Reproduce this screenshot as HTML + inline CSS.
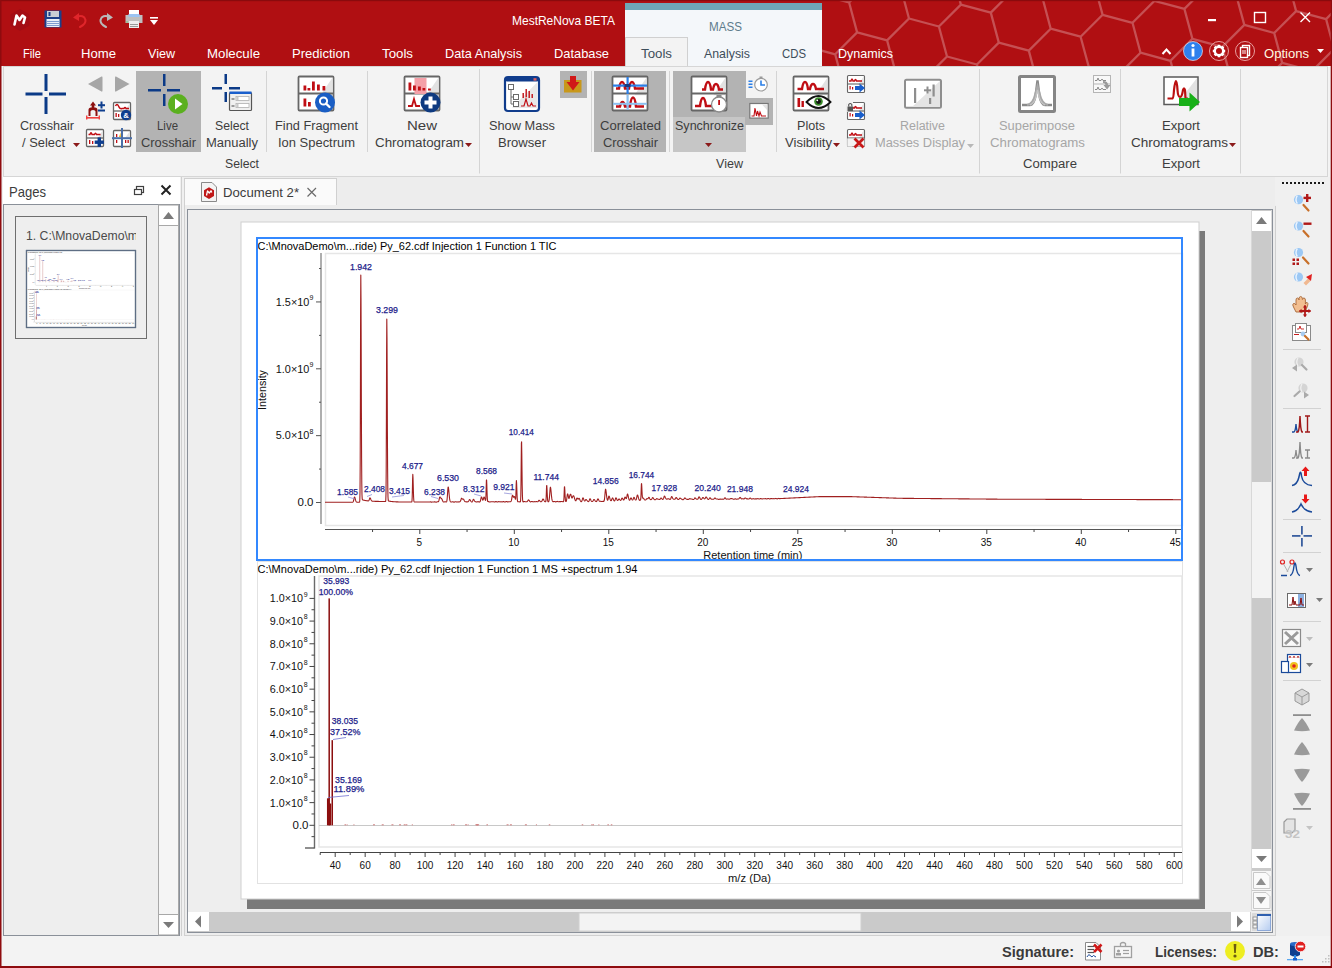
<!DOCTYPE html><html><head><meta charset="utf-8"><style>html,body{margin:0;padding:0;width:1332px;height:968px;overflow:hidden;background:#F3F3F3}</style></head><body><svg width="1332" height="968" viewBox="0 0 1332 968" style="position:absolute;left:0;top:0">
<rect x="0" y="0" width="1332" height="968" fill="#F3F3F3" />
<rect x="0" y="0" width="1332" height="66" fill="#B00F12" />
<clipPath id="hexclip"><rect x="822" y="1" width="510" height="65"/></clipPath>
<path d="M701.5 74.1L731.5 82.1M701.5 74.1L679.6 96.0M701.5 74.1L693.5 44.1M739.5 112.1L769.5 120.1M739.5 112.1L717.6 134.0M739.5 112.1L731.5 82.1M715.4 22.2L745.4 30.2M715.4 22.2L693.5 44.1M715.4 22.2L707.4 -7.7M753.4 60.2L783.4 68.2M753.4 60.2L731.5 82.1M753.4 60.2L745.4 30.2M791.4 98.2L821.3 106.2M791.4 98.2L769.5 120.1M791.4 98.2L783.4 68.2M729.3 -29.6L759.3 -21.6M729.3 -29.6L707.4 -7.7M729.3 -29.6L721.3 -59.6M767.3 8.3L797.2 16.4M767.3 8.3L745.4 30.2M767.3 8.3L759.3 -21.6M805.3 46.3L835.2 54.3M805.3 46.3L783.4 68.2M805.3 46.3L797.2 16.4M843.2 84.3L873.2 92.3M843.2 84.3L821.3 106.2M843.2 84.3L835.2 54.3M881.2 122.2L911.1 130.3M881.2 122.2L859.3 144.1M881.2 122.2L873.2 92.3M781.2 -43.5L811.1 -35.5M781.2 -43.5L759.3 -21.6M781.2 -43.5L773.2 -73.5M819.2 -5.6L849.1 2.5M819.2 -5.6L797.2 16.4M819.2 -5.6L811.1 -35.5M857.1 32.4L887.1 40.4M857.1 32.4L835.2 54.3M857.1 32.4L849.1 2.5M895.1 70.4L925.0 78.4M895.1 70.4L873.2 92.3M895.1 70.4L887.1 40.4M933.1 108.3L963.0 116.4M933.1 108.3L911.1 130.3M933.1 108.3L925.0 78.4M833.1 -57.4L863.0 -49.4M833.1 -57.4L811.1 -35.5M833.1 -57.4L825.0 -87.4M871.0 -19.5L901.0 -11.4M871.0 -19.5L849.1 2.5M871.0 -19.5L863.0 -49.4M909.0 18.5L938.9 26.5M909.0 18.5L887.1 40.4M909.0 18.5L901.0 -11.4M947.0 56.5L976.9 64.5M947.0 56.5L925.0 78.4M947.0 56.5L938.9 26.5M984.9 94.4L1014.9 102.5M984.9 94.4L963.0 116.4M984.9 94.4L976.9 64.5M922.9 -33.4L952.8 -25.3M922.9 -33.4L901.0 -11.4M922.9 -33.4L914.9 -63.3M960.9 4.6L990.8 12.6M960.9 4.6L938.9 26.5M960.9 4.6L952.8 -25.3M998.8 42.6L1028.8 50.6M998.8 42.6L976.9 64.5M998.8 42.6L990.8 12.6M1036.8 80.5L1066.7 88.6M1036.8 80.5L1014.9 102.5M1036.8 80.5L1028.8 50.6M1074.8 118.5L1104.7 126.5M1074.8 118.5L1052.8 140.4M1074.8 118.5L1066.7 88.6M974.8 -47.3L1004.7 -39.2M974.8 -47.3L952.8 -25.3M974.8 -47.3L966.7 -77.2M1012.7 -9.3L1042.7 -1.3M1012.7 -9.3L990.8 12.6M1012.7 -9.3L1004.7 -39.2M1050.7 28.7L1080.6 36.7M1050.7 28.7L1028.8 50.6M1050.7 28.7L1042.7 -1.3M1088.7 66.6L1118.6 74.7M1088.7 66.6L1066.7 88.6M1088.7 66.6L1080.6 36.7M1126.6 104.6L1156.6 112.6M1126.6 104.6L1104.7 126.5M1126.6 104.6L1118.6 74.7M1064.6 -23.2L1094.5 -15.2M1064.6 -23.2L1042.7 -1.3M1064.6 -23.2L1056.6 -53.1M1102.6 14.8L1132.5 22.8M1102.6 14.8L1080.6 36.7M1102.6 14.8L1094.5 -15.2M1140.5 52.7L1170.5 60.8M1140.5 52.7L1118.6 74.7M1140.5 52.7L1132.5 22.8M1178.5 90.7L1208.4 98.7M1178.5 90.7L1156.6 112.6M1178.5 90.7L1170.5 60.8M1216.5 128.7L1246.4 136.7M1216.5 128.7L1194.5 150.6M1216.5 128.7L1208.4 98.7M1116.5 -37.1L1146.4 -29.1M1116.5 -37.1L1094.5 -15.2M1116.5 -37.1L1108.4 -67.0M1154.4 0.9L1184.4 8.9M1154.4 0.9L1132.5 22.8M1154.4 0.9L1146.4 -29.1M1192.4 38.8L1222.3 46.9M1192.4 38.8L1170.5 60.8M1192.4 38.8L1184.4 8.9M1230.4 76.8L1260.3 84.8M1230.4 76.8L1208.4 98.7M1230.4 76.8L1222.3 46.9M1268.3 114.8L1298.3 122.8M1268.3 114.8L1246.4 136.7M1268.3 114.8L1260.3 84.8M1168.3 -51.0L1198.3 -43.0M1168.3 -51.0L1146.4 -29.1M1168.3 -51.0L1160.3 -80.9M1206.3 -13.0L1236.2 -5.0M1206.3 -13.0L1184.4 8.9M1206.3 -13.0L1198.3 -43.0M1244.3 24.9L1274.2 33.0M1244.3 24.9L1222.3 46.9M1244.3 24.9L1236.2 -5.0M1282.2 62.9L1312.2 70.9M1282.2 62.9L1260.3 84.8M1282.2 62.9L1274.2 33.0M1320.2 100.9L1350.1 108.9M1320.2 100.9L1298.3 122.8M1320.2 100.9L1312.2 70.9M1258.2 -26.9L1288.1 -18.9M1258.2 -26.9L1236.2 -5.0M1258.2 -26.9L1250.1 -56.9M1296.1 11.1L1326.1 19.1M1296.1 11.1L1274.2 33.0M1296.1 11.1L1288.1 -18.9M1334.1 49.0L1364.0 57.0M1334.1 49.0L1312.2 70.9M1334.1 49.0L1326.1 19.1M1372.1 87.0L1402.0 95.0M1372.1 87.0L1350.1 108.9M1372.1 87.0L1364.0 57.0M1410.0 125.0L1440.0 133.0M1410.0 125.0L1388.1 146.9M1410.0 125.0L1402.0 95.0M1310.0 -40.8L1340.0 -32.8M1310.0 -40.8L1288.1 -18.9M1310.0 -40.8L1302.0 -70.8M1348.0 -2.8L1377.9 5.2M1348.0 -2.8L1326.1 19.1M1348.0 -2.8L1340.0 -32.8M1385.9 35.1L1415.9 43.1M1385.9 35.1L1364.0 57.0M1385.9 35.1L1377.9 5.2M1423.9 73.1L1453.9 81.1M1423.9 73.1L1402.0 95.0M1423.9 73.1L1415.9 43.1M1361.9 -54.7L1391.8 -46.7M1361.9 -54.7L1340.0 -32.8M1361.9 -54.7L1353.9 -84.7M1399.8 -16.7L1429.8 -8.7M1399.8 -16.7L1377.9 5.2M1399.8 -16.7L1391.8 -46.7M1437.8 21.2L1467.8 29.2M1437.8 21.2L1415.9 43.1M1437.8 21.2L1429.8 -8.7" fill="none" stroke="#C55053" stroke-width="2.3" clip-path="url(#hexclip)" stroke-linecap="round"/>
<rect x="0" y="0" width="1332" height="1.2" fill="#8A0A0D" />
<g>
<path d="M20 9 L29.5 14.5 L29.5 25.5 L20 31 L10.5 25.5 L10.5 14.5 Z" fill="#A40D14" />
<path d="M14.5 24.5 L16.5 15.5 L19.5 20 L22.5 15.5 L25 17.5 L23.5 23" fill="none" stroke="#FFFFFF" stroke-width="2.6" stroke-linejoin="round" stroke-linecap="round"/>
</g>
<rect x="44.5" y="10.5" width="17" height="17" fill="#1D3F8A" />
<rect x="47" y="11" width="12" height="6" fill="#C9CDD5" />
<rect x="48.5" y="12" width="2" height="4" fill="#1D3F8A" />
<rect x="46.5" y="19" width="13" height="8" fill="#E8EEF8" />
<line x1="47" y1="21.5" x2="59" y2="21.5" stroke="#7E9BD0" stroke-width="1" />
<line x1="47" y1="23.5" x2="59" y2="23.5" stroke="#7E9BD0" stroke-width="1" />
<line x1="47" y1="25.5" x2="59" y2="25.5" stroke="#7E9BD0" stroke-width="1" />
<path d="M76 17 Q84 14 85.5 20 Q86 24 80 27" fill="none" stroke="#E0262B" stroke-width="2" stroke-linecap="round"/>
<path d="M73 17.5 L79 13 L79 21 Z" fill="#E0262B" />
<path d="M110 17 Q102 14 100.5 20 Q100 24 106 27" fill="none" stroke="#B9B9B9" stroke-width="2" stroke-linecap="round"/>
<path d="M113 17.5 L107 13 L107 21 Z" fill="#B9B9B9" />
<rect x="129" y="10" width="10" height="5" fill="#FFFFFF" />
<rect x="125.5" y="15" width="17" height="8" fill="#BFBFBF" />
<rect x="128.5" y="14" width="11" height="3" fill="#9CC4F2" />
<rect x="129" y="21" width="10" height="7" fill="#EEEEEE" />
<line x1="130" y1="24.5" x2="138" y2="24.5" stroke="#9A9A9A" stroke-width="1" />
<line x1="130" y1="26.5" x2="138" y2="26.5" stroke="#9A9A9A" stroke-width="1" />
<rect x="126.5" y="21.5" width="1" height="1" fill="#33CC33" />
<rect x="150" y="17" width="8" height="1.6" fill="#FFFFFF" />
<path d="M150 20 L158 20 L154 25 Z" fill="#FFFFFF" />
<text x="512" y="25" font-size="13" fill="#FFFFFF" text-anchor="start" font-weight="normal" font-family='"Liberation Sans", sans-serif' textLength="103" lengthAdjust="spacingAndGlyphs" >MestReNova BETA</text>
<rect x="1208" y="19" width="8" height="2.2" fill="#FFFFFF" />
<rect x="1254.5" y="12.5" width="11" height="10" fill="none" stroke="#FFFFFF" stroke-width="1.4" />
<path d="M1300.5 12.5 L1310 22 M1310 12.5 L1300.5 22" fill="none" stroke="#FFFFFF" stroke-width="1.4" />
<text x="23" y="58" font-size="13" fill="#FFFFFF" text-anchor="start" font-weight="normal" font-family='"Liberation Sans", sans-serif' textLength="18" lengthAdjust="spacingAndGlyphs" >File</text>
<text x="81" y="58" font-size="13" fill="#FFFFFF" text-anchor="start" font-weight="normal" font-family='"Liberation Sans", sans-serif' textLength="35" lengthAdjust="spacingAndGlyphs" >Home</text>
<text x="148" y="58" font-size="13" fill="#FFFFFF" text-anchor="start" font-weight="normal" font-family='"Liberation Sans", sans-serif' textLength="27" lengthAdjust="spacingAndGlyphs" >View</text>
<text x="207" y="58" font-size="13" fill="#FFFFFF" text-anchor="start" font-weight="normal" font-family='"Liberation Sans", sans-serif' textLength="53" lengthAdjust="spacingAndGlyphs" >Molecule</text>
<text x="292" y="58" font-size="13" fill="#FFFFFF" text-anchor="start" font-weight="normal" font-family='"Liberation Sans", sans-serif' textLength="58" lengthAdjust="spacingAndGlyphs" >Prediction</text>
<text x="382" y="58" font-size="13" fill="#FFFFFF" text-anchor="start" font-weight="normal" font-family='"Liberation Sans", sans-serif' textLength="31" lengthAdjust="spacingAndGlyphs" >Tools</text>
<text x="445" y="58" font-size="13" fill="#FFFFFF" text-anchor="start" font-weight="normal" font-family='"Liberation Sans", sans-serif' textLength="77" lengthAdjust="spacingAndGlyphs" >Data Analysis</text>
<text x="554" y="58" font-size="13" fill="#FFFFFF" text-anchor="start" font-weight="normal" font-family='"Liberation Sans", sans-serif' textLength="55" lengthAdjust="spacingAndGlyphs" >Database</text>
<rect x="625" y="3" width="197" height="63" fill="#F4F7FA" />
<rect x="625" y="3" width="197" height="7" fill="#6FA6B6" />
<text x="709" y="31" font-size="12.5" fill="#5E7C8C" text-anchor="start" font-weight="normal" font-family='"Liberation Sans", sans-serif' textLength="33" lengthAdjust="spacingAndGlyphs" >MASS</text>
<rect x="625.5" y="37.5" width="62" height="29" fill="#F3F3F3" stroke="#D0D0D0" stroke-width="1" />
<rect x="626" y="60" width="61" height="7" fill="#F3F3F3" />
<text x="641" y="58" font-size="13" fill="#3E4E5A" text-anchor="start" font-weight="normal" font-family='"Liberation Sans", sans-serif' textLength="31" lengthAdjust="spacingAndGlyphs" >Tools</text>
<text x="704" y="58" font-size="13" fill="#3E4E5A" text-anchor="start" font-weight="normal" font-family='"Liberation Sans", sans-serif' textLength="46" lengthAdjust="spacingAndGlyphs" >Analysis</text>
<text x="782" y="58" font-size="13" fill="#3E4E5A" text-anchor="start" font-weight="normal" font-family='"Liberation Sans", sans-serif' textLength="24" lengthAdjust="spacingAndGlyphs" >CDS</text>
<text x="838" y="58" font-size="13" fill="#FFFFFF" text-anchor="start" font-weight="normal" font-family='"Liberation Sans", sans-serif' textLength="55" lengthAdjust="spacingAndGlyphs" >Dynamics</text>
<path d="M1162.5 54 L1166.5 49.5 L1170.5 54" fill="none" stroke="#FFFFFF" stroke-width="2" />
<circle cx="1193" cy="51" r="9.5" fill="#2F80ED" stroke="#FFFFFF" stroke-opacity="0.6" stroke-width="1"/>
<rect x="1191.6" y="48.5" width="2.8" height="8" fill="#FFFFFF" />
<circle cx="1193" cy="45.5" r="1.6" fill="#FFFFFF"/>
<circle cx="1219" cy="51" r="9.5" fill="none" stroke="#E8A0A0" stroke-width="1"/>
<path d="M1222.50 51.00L1225.20 51.00M1221.47 53.47L1223.38 55.38M1219.00 54.50L1219.00 57.20M1216.53 53.47L1214.62 55.38M1215.50 51.00L1212.80 51.00M1216.53 48.53L1214.62 46.62M1219.00 47.50L1219.00 44.80M1221.47 48.53L1223.38 46.62" fill="none" stroke="#FFFFFF" stroke-width="2.6" />
<circle cx="1219" cy="51" r="4.2" fill="none" stroke="#FFFFFF" stroke-width="2.4"/>
<circle cx="1245" cy="51" r="9.5" fill="none" stroke="#E8A0A0" stroke-width="1"/>
<rect x="1242.5" y="45.5" width="7" height="10" fill="none" stroke="#FFFFFF" stroke-width="1.4" />
<rect x="1240.5" y="47.5" width="7" height="10" fill="#B00F12" stroke="#FFFFFF" stroke-width="1.4" />
<line x1="1242" y1="51" x2="1246" y2="51" stroke="#FFFFFF" stroke-width="1" />
<line x1="1242" y1="53" x2="1246" y2="53" stroke="#FFFFFF" stroke-width="1" />
<text x="1264" y="58" font-size="13" fill="#FFF8E0" text-anchor="start" font-weight="normal" font-family='"Liberation Sans", sans-serif' textLength="45" lengthAdjust="spacingAndGlyphs" >Options</text>
<path d="M1317 49 L1324 49 L1320.5 53 Z" fill="#FFFFFF" />
<rect x="0" y="66" width="1332" height="111" fill="#F3F3F3" />
<rect x="3.5" y="66.5" width="1324" height="110" fill="none" stroke="#D6D6D6" stroke-width="1" />
<rect x="136" y="71" width="65" height="81" fill="#B3B3B3" />
<rect x="594" y="71" width="72" height="81" fill="#B3B3B3" />
<rect x="673" y="71" width="73" height="81" fill="#B3B3B3" />
<rect x="673" y="117" width="73" height="35" fill="#C6C6C6" />
<rect x="745" y="98" width="28" height="27" fill="#B3B3B3" />
<rect x="560" y="71" width="27" height="27" fill="#B3B3B3" />
<line x1="266.5" y1="71" x2="266.5" y2="152" stroke="#D4D4D4" stroke-width="1" />
<line x1="367.5" y1="71" x2="367.5" y2="152" stroke="#D4D4D4" stroke-width="1" />
<line x1="591.5" y1="71" x2="591.5" y2="152" stroke="#D4D4D4" stroke-width="1" />
<line x1="669.5" y1="71" x2="669.5" y2="152" stroke="#D4D4D4" stroke-width="1" />
<line x1="776.5" y1="71" x2="776.5" y2="152" stroke="#D4D4D4" stroke-width="1" />
<line x1="479.5" y1="69" x2="479.5" y2="173.5" stroke="#D4D4D4" stroke-width="1" />
<line x1="979.5" y1="69" x2="979.5" y2="173.5" stroke="#D4D4D4" stroke-width="1" />
<line x1="1120.5" y1="69" x2="1120.5" y2="173.5" stroke="#D4D4D4" stroke-width="1" />
<line x1="1240.5" y1="69" x2="1240.5" y2="173.5" stroke="#D4D4D4" stroke-width="1" />
<text x="20" y="130" font-size="12.5" fill="#3D3D3D" text-anchor="start" font-weight="normal" font-family='"Liberation Sans", sans-serif' textLength="54" lengthAdjust="spacingAndGlyphs" >Crosshair</text>
<text x="22" y="147" font-size="12.5" fill="#3D3D3D" text-anchor="start" font-weight="normal" font-family='"Liberation Sans", sans-serif' textLength="43" lengthAdjust="spacingAndGlyphs" >/ Select</text>
<path d="M73 143 L80 143 L76.5 147 Z" fill="#8B1A1A" />
<text x="157" y="130" font-size="12.5" fill="#3D3D3D" text-anchor="start" font-weight="normal" font-family='"Liberation Sans", sans-serif' textLength="21" lengthAdjust="spacingAndGlyphs" >Live</text>
<text x="141" y="147" font-size="12.5" fill="#3D3D3D" text-anchor="start" font-weight="normal" font-family='"Liberation Sans", sans-serif' textLength="55" lengthAdjust="spacingAndGlyphs" >Crosshair</text>
<text x="215" y="130" font-size="12.5" fill="#3D3D3D" text-anchor="start" font-weight="normal" font-family='"Liberation Sans", sans-serif' textLength="34" lengthAdjust="spacingAndGlyphs" >Select</text>
<text x="206" y="147" font-size="12.5" fill="#3D3D3D" text-anchor="start" font-weight="normal" font-family='"Liberation Sans", sans-serif' textLength="52" lengthAdjust="spacingAndGlyphs" >Manually</text>
<text x="275" y="130" font-size="12.5" fill="#3D3D3D" text-anchor="start" font-weight="normal" font-family='"Liberation Sans", sans-serif' textLength="83" lengthAdjust="spacingAndGlyphs" >Find Fragment</text>
<text x="278" y="147" font-size="12.5" fill="#3D3D3D" text-anchor="start" font-weight="normal" font-family='"Liberation Sans", sans-serif' textLength="77" lengthAdjust="spacingAndGlyphs" >Ion Spectrum</text>
<text x="407" y="130" font-size="12.5" fill="#3D3D3D" text-anchor="start" font-weight="normal" font-family='"Liberation Sans", sans-serif' textLength="30" lengthAdjust="spacingAndGlyphs" >New</text>
<text x="375" y="147" font-size="12.5" fill="#3D3D3D" text-anchor="start" font-weight="normal" font-family='"Liberation Sans", sans-serif' textLength="89" lengthAdjust="spacingAndGlyphs" >Chromatogram</text>
<path d="M465 143 L472 143 L468.5 147 Z" fill="#8B1A1A" />
<text x="489" y="130" font-size="12.5" fill="#3D3D3D" text-anchor="start" font-weight="normal" font-family='"Liberation Sans", sans-serif' textLength="66" lengthAdjust="spacingAndGlyphs" >Show Mass</text>
<text x="498" y="147" font-size="12.5" fill="#3D3D3D" text-anchor="start" font-weight="normal" font-family='"Liberation Sans", sans-serif' textLength="48" lengthAdjust="spacingAndGlyphs" >Browser</text>
<text x="600" y="130" font-size="12.5" fill="#3D3D3D" text-anchor="start" font-weight="normal" font-family='"Liberation Sans", sans-serif' textLength="61" lengthAdjust="spacingAndGlyphs" >Correlated</text>
<text x="603" y="147" font-size="12.5" fill="#3D3D3D" text-anchor="start" font-weight="normal" font-family='"Liberation Sans", sans-serif' textLength="55" lengthAdjust="spacingAndGlyphs" >Crosshair</text>
<text x="675" y="130" font-size="12.5" fill="#3D3D3D" text-anchor="start" font-weight="normal" font-family='"Liberation Sans", sans-serif' textLength="69" lengthAdjust="spacingAndGlyphs" >Synchronize</text>
<path d="M705 143 L712 143 L708.5 147 Z" fill="#8B1A1A" />
<text x="797" y="130" font-size="12.5" fill="#3D3D3D" text-anchor="start" font-weight="normal" font-family='"Liberation Sans", sans-serif' textLength="28" lengthAdjust="spacingAndGlyphs" >Plots</text>
<text x="785" y="147" font-size="12.5" fill="#3D3D3D" text-anchor="start" font-weight="normal" font-family='"Liberation Sans", sans-serif' textLength="47" lengthAdjust="spacingAndGlyphs" >Visibility</text>
<path d="M833 143 L840 143 L836.5 147 Z" fill="#8B1A1A" />
<text x="900" y="130" font-size="12.5" fill="#A6A6A6" text-anchor="start" font-weight="normal" font-family='"Liberation Sans", sans-serif' textLength="45" lengthAdjust="spacingAndGlyphs" >Relative</text>
<text x="875" y="147" font-size="12.5" fill="#A6A6A6" text-anchor="start" font-weight="normal" font-family='"Liberation Sans", sans-serif' textLength="90" lengthAdjust="spacingAndGlyphs" >Masses Display</text>
<path d="M967 144 L974 144 L970.5 148 Z" fill="#B8B8B8" />
<text x="999" y="130" font-size="12.5" fill="#A6A6A6" text-anchor="start" font-weight="normal" font-family='"Liberation Sans", sans-serif' textLength="76" lengthAdjust="spacingAndGlyphs" >Superimpose</text>
<text x="990" y="147" font-size="12.5" fill="#A6A6A6" text-anchor="start" font-weight="normal" font-family='"Liberation Sans", sans-serif' textLength="95" lengthAdjust="spacingAndGlyphs" >Chromatograms</text>
<text x="1162" y="130" font-size="12.5" fill="#3D3D3D" text-anchor="start" font-weight="normal" font-family='"Liberation Sans", sans-serif' textLength="38" lengthAdjust="spacingAndGlyphs" >Export</text>
<text x="1131" y="147" font-size="12.5" fill="#3D3D3D" text-anchor="start" font-weight="normal" font-family='"Liberation Sans", sans-serif' textLength="97" lengthAdjust="spacingAndGlyphs" >Chromatograms</text>
<path d="M1229 143 L1236 143 L1232.5 147 Z" fill="#8B1A1A" />
<text x="225" y="168" font-size="12.5" fill="#3D3D3D" text-anchor="start" font-weight="normal" font-family='"Liberation Sans", sans-serif' textLength="34" lengthAdjust="spacingAndGlyphs" >Select</text>
<text x="716" y="168" font-size="12.5" fill="#3D3D3D" text-anchor="start" font-weight="normal" font-family='"Liberation Sans", sans-serif' textLength="27" lengthAdjust="spacingAndGlyphs" >View</text>
<text x="1023" y="168" font-size="12.5" fill="#3D3D3D" text-anchor="start" font-weight="normal" font-family='"Liberation Sans", sans-serif' textLength="54" lengthAdjust="spacingAndGlyphs" >Compare</text>
<text x="1162" y="168" font-size="12.5" fill="#3D3D3D" text-anchor="start" font-weight="normal" font-family='"Liberation Sans", sans-serif' textLength="38" lengthAdjust="spacingAndGlyphs" >Export</text>
<rect x="0" y="177" width="1332" height="759" fill="#F0F0F0" />
<rect x="3" y="177" width="177" height="27" fill="#FFFFFF" />
<text x="9" y="197" font-size="15" fill="#3C3C3C" text-anchor="start" font-weight="normal" font-family='"Liberation Sans", sans-serif' textLength="37" lengthAdjust="spacingAndGlyphs" >Pages</text>
<rect x="136.5" y="186.5" width="7" height="6" fill="none" stroke="#404040" stroke-width="1.2" />
<rect x="134.5" y="189.5" width="7" height="5" fill="#FFFFFF" stroke="#404040" stroke-width="1.2" />
<path d="M161.5 185.5 L170.5 194.5 M170.5 185.5 L161.5 194.5" fill="none" stroke="#222" stroke-width="2" />
<rect x="3.5" y="204.5" width="176" height="731" fill="#EEEEEE" stroke="#8A9099" stroke-width="1" />
<rect x="158.5" y="205" width="20" height="730" fill="#F5F5F5" stroke="#A8A8A8" stroke-width="1" />
<rect x="159" y="206" width="19" height="19" fill="#FFFFFF" />
<line x1="159" y1="225.5" x2="178" y2="225.5" stroke="#A8A8A8" stroke-width="1" />
<path d="M163 219 L174 219 L168.5 212 Z" fill="#7A7A7A" />
<rect x="159" y="915" width="19" height="19" fill="#FFFFFF" />
<line x1="159" y1="914.5" x2="178" y2="914.5" stroke="#A8A8A8" stroke-width="1" />
<path d="M163 922 L174 922 L168.5 928 Z" fill="#7A7A7A" />
<rect x="15.5" y="216.5" width="131" height="122" fill="#EEEEEE" stroke="#6E6E6E" stroke-width="1" />
<text x="26" y="240" font-size="12.5" fill="#4A4A4A" text-anchor="start" font-weight="normal" font-family='"Liberation Sans", sans-serif' textLength="112" lengthAdjust="spacingAndGlyphs" >1. C:\MnovaDemo\m</text>
<rect x="136" y="225" width="10" height="25" fill="#EEEEEE" />
<rect x="26.5" y="250.5" width="109" height="77" fill="#FFFFFF" stroke="#5E6E84" stroke-width="1.2" />
<line x1="181.5" y1="177" x2="181.5" y2="936" stroke="#D0D0D0" stroke-width="1" />
<rect x="184" y="177" width="1091" height="29" fill="#EDEDED" />
<rect x="184.5" y="178.5" width="152" height="27" fill="#FAFAFA" stroke="#D0D0D0" stroke-width="1" />
<text x="223" y="197" font-size="13" fill="#3C3C3C" text-anchor="start" font-weight="normal" font-family='"Liberation Sans", sans-serif' textLength="76" lengthAdjust="spacingAndGlyphs" >Document 2*</text>
<path d="M307.5 188 L316 196.5 M316 188 L307.5 196.5" fill="none" stroke="#6A6A6A" stroke-width="1.2" />
<path d="M201.5 182.5 L212 182.5 L216.5 187 L216.5 201.5 L201.5 201.5 Z" fill="#F4F4F4" stroke="#8A8A8A" stroke-width="1" />
<path d="M209 187.3 L214 190.2 L214 196 L209 198.9 L204 196 L204 190.2 Z" fill="#C01818" />
<path d="M206.5 195.5 L207.5 190.8 L209.3 193 L211 190.8 L211.8 192.5" fill="none" stroke="#FFF" stroke-width="1.3" stroke-linejoin="round"/>
<rect x="184.5" y="205.5" width="1091" height="730" fill="#EDEDED" stroke="#D0D0D0" stroke-width="1" />
<rect x="185" y="205" width="1091" height="1.2" fill="#EDEDED" />
<rect x="187.5" y="209.5" width="1085" height="723" fill="#EEEEEE" stroke="#8A9099" stroke-width="1" />
<rect x="247" y="231" width="958" height="678" fill="#7A7A7A" />
<rect x="241" y="222" width="958" height="677" fill="#FFFFFF" stroke="#CFCFCF" stroke-width="1" />
<rect x="1251.5" y="210" width="20" height="701" fill="#CACACA" />
<line x1="1251.5" y1="210" x2="1251.5" y2="911" stroke="#D8D8D8" stroke-width="1" />
<rect x="1252" y="211" width="19" height="20" fill="#FFFFFF" />
<path d="M1256 224 L1267 224 L1261.5 217 Z" fill="#7A7A7A" />
<rect x="1252" y="482" width="19" height="116" fill="#F3F3F3" />
<rect x="1252" y="849" width="19" height="19" fill="#FFFFFF" />
<path d="M1256 856 L1267 856 L1261.5 862 Z" fill="#7A7A7A" />
<rect x="1252" y="871" width="19" height="19" fill="#F6F6F6" />
<path d="M1253.5 872.5 L1266 872.5 L1270 876.5 L1270 888.5 L1253.5 888.5 Z" fill="#FAFAFA" stroke="#C8C8C8" stroke-width="1" />
<path d="M1256 885 L1266 885 L1261 878 Z" fill="#8E8E8E" />
<rect x="1252" y="891" width="19" height="19" fill="#F6F6F6" />
<path d="M1253.5 892.5 L1266 892.5 L1270 896.5 L1270 908.5 L1253.5 908.5 Z" fill="#FAFAFA" stroke="#C8C8C8" stroke-width="1" />
<path d="M1256 897 L1266 897 L1261 904 Z" fill="#8E8E8E" />
<rect x="188" y="912" width="1063" height="20" fill="#CACACA" />
<rect x="188" y="912" width="21" height="19" fill="#FFFFFF" />
<path d="M195 921.5 L201 915.5 L201 927.5 Z" fill="#7A7A7A" />
<rect x="579" y="913" width="282" height="18" fill="#F3F3F3" stroke="#D0D0D0" stroke-width="1" />
<rect x="1231" y="912" width="19" height="19" fill="#FFFFFF" />
<path d="M1243 921.5 L1237 915.5 L1237 927.5 Z" fill="#7A7A7A" />
<rect x="1252" y="913" width="19" height="18" fill="#DADADA" />
<defs><linearGradient id="cg" x1="0" y1="0" x2="1" y2="1"><stop offset="0" stop-color="#FFFFFF"/><stop offset="1" stop-color="#B5CCF0"/></linearGradient></defs>
<rect x="1257.5" y="914.5" width="13" height="16" fill="url(#cg)" stroke="#8CA8D8" stroke-width="1" />
<rect x="1257" y="914" width="14" height="2" fill="#3060B0" />
<rect x="1253" y="917" width="4" height="3" fill="#F5F5F5" stroke="#8A8A8A" stroke-width="0.8" />
<rect x="1253" y="921" width="4" height="3" fill="#F5F5F5" stroke="#8A8A8A" stroke-width="0.8" />
<rect x="1253" y="925" width="4" height="3" fill="#F5F5F5" stroke="#8A8A8A" stroke-width="0.8" />
<rect x="1276" y="177" width="54" height="759" fill="#F0F0F0" />
<line x1="1275.5" y1="206" x2="1275.5" y2="936" stroke="#D0D0D0" stroke-width="1" />
<rect x="1282" y="182" width="2" height="2" fill="#1A1A1A" />
<rect x="1286" y="182" width="2" height="2" fill="#1A1A1A" />
<rect x="1290" y="182" width="2" height="2" fill="#1A1A1A" />
<rect x="1294" y="182" width="2" height="2" fill="#1A1A1A" />
<rect x="1298" y="182" width="2" height="2" fill="#1A1A1A" />
<rect x="1302" y="182" width="2" height="2" fill="#1A1A1A" />
<rect x="1306" y="182" width="2" height="2" fill="#1A1A1A" />
<rect x="1310" y="182" width="2" height="2" fill="#1A1A1A" />
<rect x="1314" y="182" width="2" height="2" fill="#1A1A1A" />
<rect x="1318" y="182" width="2" height="2" fill="#1A1A1A" />
<rect x="1322" y="182" width="2" height="2" fill="#1A1A1A" />
<rect x="0" y="936" width="1332" height="30" fill="#F3F3F3" />
<text x="1002" y="957" font-size="14" fill="#3A3A3A" text-anchor="start" font-weight="bold" font-family='"Liberation Sans", sans-serif' textLength="72" lengthAdjust="spacingAndGlyphs" >Signature:</text>
<text x="1155" y="957" font-size="14" fill="#3A3A3A" text-anchor="start" font-weight="bold" font-family='"Liberation Sans", sans-serif' textLength="62" lengthAdjust="spacingAndGlyphs" >Licenses:</text>
<text x="1253" y="957" font-size="14" fill="#3A3A3A" text-anchor="start" font-weight="bold" font-family='"Liberation Sans", sans-serif' textLength="26" lengthAdjust="spacingAndGlyphs" >DB:</text>
<circle cx="1235" cy="951" r="10" fill="#EEEE22"/>
<path d="M1233.6 944 L1236.4 944 L1235.8 953 L1234.2 953 Z" fill="#6A5A10" />
<circle cx="1235" cy="956" r="1.6" fill="#6A5A10"/>
<rect x="0" y="0" width="1.5" height="968" fill="#8E0B0E" />
<rect x="1330.7" y="0" width="1.3" height="968" fill="#8E0B0E" />
<rect x="0" y="966" width="1332" height="2" fill="#8E0B0E" />
<g id="pg">
<rect x="257" y="238" width="925" height="322" fill="#FFFFFF" />
<text x="257.5" y="250" font-size="11" fill="#000" text-anchor="start" font-weight="normal" font-family='"Liberation Sans", sans-serif' textLength="299" lengthAdjust="spacingAndGlyphs" >C:\MnovaDemo\m...ride) Py_62.cdf Injection 1 Function 1 TIC</text>
<rect x="325.5" y="253.5" width="857" height="272" fill="#FFFFFF" stroke="#E6E6E6" stroke-width="1.5" />
<line x1="321" y1="253" x2="321" y2="524" stroke="#9A9A9A" stroke-width="1.6" />
<line x1="316" y1="301.95000000000005" x2="321" y2="301.95000000000005" stroke="#555" stroke-width="1" />
<text x="309.3" y="305.75000000000006" font-size="10" fill="#111" text-anchor="end" font-weight="normal" font-family='"Liberation Sans", sans-serif' textLength="33.5" lengthAdjust="spacingAndGlyphs" >1.5×10</text>
<text x="309.5" y="299.95000000000005" font-size="7" fill="#111" text-anchor="start" font-weight="normal" font-family='"Liberation Sans", sans-serif' >9</text>
<line x1="316" y1="368.8" x2="321" y2="368.8" stroke="#555" stroke-width="1" />
<text x="309.3" y="372.6" font-size="10" fill="#111" text-anchor="end" font-weight="normal" font-family='"Liberation Sans", sans-serif' textLength="33.5" lengthAdjust="spacingAndGlyphs" >1.0×10</text>
<text x="309.5" y="366.8" font-size="7" fill="#111" text-anchor="start" font-weight="normal" font-family='"Liberation Sans", sans-serif' >9</text>
<line x1="316" y1="435.65" x2="321" y2="435.65" stroke="#555" stroke-width="1" />
<text x="309.3" y="439.45" font-size="10" fill="#111" text-anchor="end" font-weight="normal" font-family='"Liberation Sans", sans-serif' textLength="33.5" lengthAdjust="spacingAndGlyphs" >5.0×10</text>
<text x="309.5" y="433.65" font-size="7" fill="#111" text-anchor="start" font-weight="normal" font-family='"Liberation Sans", sans-serif' >8</text>
<text x="313.5" y="506.3" font-size="10" fill="#111" text-anchor="end" font-weight="normal" font-family='"Liberation Sans", sans-serif' textLength="16" lengthAdjust="spacingAndGlyphs" >0.0</text>
<line x1="316" y1="502.5" x2="321" y2="502.5" stroke="#555" stroke-width="1" />
<line x1="319" y1="268.52500000000003" x2="321" y2="268.52500000000003" stroke="#555" stroke-width="1" />
<line x1="319" y1="335.375" x2="321" y2="335.375" stroke="#555" stroke-width="1" />
<line x1="319" y1="402.225" x2="321" y2="402.225" stroke="#555" stroke-width="1" />
<line x1="319" y1="469.075" x2="321" y2="469.075" stroke="#555" stroke-width="1" />
<text x="266" y="410" font-size="10" fill="#111" font-family='Liberation Sans' transform="rotate(-90 266 410)" textLength="40" lengthAdjust="spacingAndGlyphs">Intensity</text>
<line x1="325" y1="529.5" x2="1182" y2="529.5" stroke="#555" stroke-width="1" />
<line x1="419.8" y1="529.5" x2="419.8" y2="534" stroke="#444" stroke-width="1" />
<text x="419.3" y="545.7" font-size="10" fill="#111" text-anchor="middle" font-weight="normal" font-family='"Liberation Sans", sans-serif' >5</text>
<line x1="514.3" y1="529.5" x2="514.3" y2="534" stroke="#444" stroke-width="1" />
<text x="513.8" y="545.7" font-size="10" fill="#111" text-anchor="middle" font-weight="normal" font-family='"Liberation Sans", sans-serif' >10</text>
<line x1="608.8" y1="529.5" x2="608.8" y2="534" stroke="#444" stroke-width="1" />
<text x="608.3" y="545.7" font-size="10" fill="#111" text-anchor="middle" font-weight="normal" font-family='"Liberation Sans", sans-serif' >15</text>
<line x1="703.3" y1="529.5" x2="703.3" y2="534" stroke="#444" stroke-width="1" />
<text x="702.8" y="545.7" font-size="10" fill="#111" text-anchor="middle" font-weight="normal" font-family='"Liberation Sans", sans-serif' >20</text>
<line x1="797.8" y1="529.5" x2="797.8" y2="534" stroke="#444" stroke-width="1" />
<text x="797.3" y="545.7" font-size="10" fill="#111" text-anchor="middle" font-weight="normal" font-family='"Liberation Sans", sans-serif' >25</text>
<line x1="892.3" y1="529.5" x2="892.3" y2="534" stroke="#444" stroke-width="1" />
<text x="891.8" y="545.7" font-size="10" fill="#111" text-anchor="middle" font-weight="normal" font-family='"Liberation Sans", sans-serif' >30</text>
<line x1="986.8" y1="529.5" x2="986.8" y2="534" stroke="#444" stroke-width="1" />
<text x="986.3" y="545.7" font-size="10" fill="#111" text-anchor="middle" font-weight="normal" font-family='"Liberation Sans", sans-serif' >35</text>
<line x1="1081.3" y1="529.5" x2="1081.3" y2="534" stroke="#444" stroke-width="1" />
<text x="1080.8" y="545.7" font-size="10" fill="#111" text-anchor="middle" font-weight="normal" font-family='"Liberation Sans", sans-serif' >40</text>
<line x1="1175.8" y1="529.5" x2="1175.8" y2="534" stroke="#444" stroke-width="1" />
<text x="1175.3" y="545.7" font-size="10" fill="#111" text-anchor="middle" font-weight="normal" font-family='"Liberation Sans", sans-serif' >45</text>
<line x1="372.55" y1="529.5" x2="372.55" y2="532" stroke="#444" stroke-width="1" />
<line x1="467.05" y1="529.5" x2="467.05" y2="532" stroke="#444" stroke-width="1" />
<line x1="561.55" y1="529.5" x2="561.55" y2="532" stroke="#444" stroke-width="1" />
<line x1="656.05" y1="529.5" x2="656.05" y2="532" stroke="#444" stroke-width="1" />
<line x1="750.55" y1="529.5" x2="750.55" y2="532" stroke="#444" stroke-width="1" />
<line x1="845.05" y1="529.5" x2="845.05" y2="532" stroke="#444" stroke-width="1" />
<line x1="939.55" y1="529.5" x2="939.55" y2="532" stroke="#444" stroke-width="1" />
<line x1="1034.05" y1="529.5" x2="1034.05" y2="532" stroke="#444" stroke-width="1" />
<line x1="1128.55" y1="529.5" x2="1128.55" y2="532" stroke="#444" stroke-width="1" />
<text x="703.3" y="558.6" font-size="10" fill="#111" text-anchor="start" font-weight="normal" font-family='"Liberation Sans", sans-serif' textLength="99" lengthAdjust="spacingAndGlyphs" >Retention time (min)</text>
<polyline points="325.00,502.30 325.20,502.30 325.40,502.30 325.60,502.30 325.80,502.30 326.00,502.30 326.20,502.30 326.40,502.30 326.60,502.30 326.80,502.29 327.00,502.29 327.20,502.29 327.40,502.29 327.60,502.29 327.80,502.29 328.00,502.29 328.20,502.29 328.40,502.29 328.60,502.29 328.80,502.29 329.00,502.29 329.20,502.29 329.40,502.29 329.60,502.29 329.80,502.29 330.00,502.28 330.20,502.28 330.40,502.28 330.60,502.28 330.80,502.28 331.00,502.28 331.20,502.28 331.40,502.28 331.60,502.28 331.80,502.28 332.00,502.28 332.20,502.28 332.40,502.28 332.60,502.28 332.80,502.28 333.00,502.28 333.20,502.28 333.40,502.27 333.60,502.27 333.80,502.27 334.00,502.27 334.20,502.27 334.40,502.27 334.60,502.27 334.80,502.27 335.00,502.27 335.20,502.27 335.40,502.27 335.60,502.27 335.80,502.27 336.00,502.27 336.20,502.27 336.40,502.27 336.60,502.26 336.80,502.26 337.00,502.26 337.20,502.26 337.40,502.26 337.60,502.26 337.80,502.26 338.00,502.26 338.20,502.26 338.40,502.26 338.60,502.26 338.80,502.26 339.00,502.26 339.20,502.26 339.40,502.26 339.60,502.26 339.80,502.26 340.00,502.25 340.20,502.25 340.40,502.25 340.60,502.25 340.80,502.25 341.00,502.25 341.20,502.25 341.40,502.25 341.60,502.25 341.80,502.25 342.00,502.25 342.20,502.25 342.40,502.25 342.60,502.25 342.80,502.25 343.00,502.25 343.20,502.24 343.40,502.24 343.60,502.24 343.80,502.24 344.00,502.24 344.20,502.24 344.40,502.24 344.60,502.24 344.80,502.24 345.00,502.24 345.20,502.24 345.40,502.24 345.60,502.24 345.80,502.24 346.00,502.24 346.20,502.24 346.40,502.24 346.60,502.23 346.80,502.23 347.00,502.23 347.20,502.23 347.40,502.23 347.60,502.23 347.80,502.23 348.00,502.23 348.20,502.23 348.40,502.23 348.60,502.23 348.80,502.23 349.00,502.23 349.20,502.23 349.40,502.23 349.60,502.23 349.80,502.22 350.00,502.22 350.20,502.22 350.40,502.22 350.60,502.22 350.80,502.22 351.00,502.22 351.20,502.22 351.40,502.22 351.60,502.22 351.80,502.22 352.00,502.22 352.20,502.21 352.40,502.21 352.60,502.18 352.80,502.12 353.00,501.99 353.20,501.72 353.40,501.24 353.60,500.52 353.80,499.57 354.00,498.53 354.20,497.61 354.40,497.07 354.60,497.04 354.80,497.34 355.00,497.90 355.20,498.62 355.40,499.40 355.60,500.14 355.80,500.77 356.00,501.27 356.20,501.63 356.40,501.87 356.60,502.02 356.80,502.11 357.00,502.16 357.20,502.18 357.40,502.19 357.60,502.20 357.80,502.20 358.00,502.20 358.20,502.20 358.40,502.20 358.60,502.20 358.80,502.20 359.00,502.20 359.20,502.20 359.40,502.18 359.60,501.99 359.80,500.47 360.00,492.21 360.20,463.02 360.40,398.18 360.60,315.31 360.80,275.00 361.00,298.09 361.20,351.48 361.40,412.93 361.60,458.70 361.80,484.07 362.00,494.93 362.20,498.60 362.40,499.61 362.60,499.86 362.80,499.95 363.00,500.01 363.20,500.06 363.40,500.11 363.60,500.16 363.80,500.20 364.00,500.25 364.20,500.29 364.40,500.33 364.60,500.37 364.80,500.41 365.00,500.45 365.20,500.49 365.40,500.52 365.60,500.56 365.80,500.59 366.00,500.62 366.20,500.65 366.40,500.68 366.60,500.71 366.80,500.74 367.00,500.76 367.20,500.79 367.40,500.82 367.60,500.84 367.80,500.86 368.00,500.87 368.20,500.87 368.40,500.84 368.60,500.74 368.80,500.54 369.00,500.20 369.20,499.71 369.40,499.10 369.60,498.51 369.80,498.06 370.00,497.91 370.20,498.02 370.40,498.30 370.60,498.71 370.80,499.19 371.00,499.67 371.20,500.10 371.40,500.46 371.60,500.73 371.80,500.93 372.00,501.06 372.20,501.14 372.40,501.19 372.60,501.22 372.80,501.24 373.00,501.26 373.20,501.27 373.40,501.28 373.60,501.29 373.80,501.29 374.00,501.30 374.20,501.31 374.40,501.32 374.60,501.32 374.80,501.33 375.00,501.34 375.20,501.34 375.40,501.35 375.60,501.36 375.80,501.36 376.00,501.37 376.20,501.37 376.40,501.38 376.60,501.38 376.80,501.39 377.00,501.39 377.20,501.40 377.40,501.40 377.60,501.40 377.80,501.41 378.00,501.41 378.20,501.42 378.40,501.42 378.60,501.42 378.80,501.43 379.00,501.43 379.20,501.43 379.40,501.44 379.60,501.44 379.80,501.44 380.00,501.44 380.20,501.45 380.40,501.45 380.60,501.45 380.80,501.45 381.00,501.45 381.20,501.46 381.40,501.46 381.60,501.46 381.80,501.46 382.00,501.46 382.20,501.47 382.40,501.47 382.60,501.47 382.80,501.47 383.00,501.47 383.20,501.47 383.40,501.47 383.60,501.48 383.80,501.48 384.00,501.48 384.20,501.48 384.40,501.48 384.60,501.48 384.80,501.48 385.00,501.48 385.20,501.48 385.40,501.47 385.60,501.32 385.80,500.10 386.00,493.44 386.20,470.55 386.40,418.28 386.60,351.49 386.80,319.00 387.00,337.61 387.20,381.40 387.40,430.93 387.60,467.82 387.80,488.27 388.00,497.02 388.20,499.97 388.40,500.79 388.60,500.99 388.80,501.06 389.00,501.10 389.20,501.14 389.40,501.18 389.60,501.22 389.80,501.25 390.00,501.28 390.20,501.32 390.40,501.35 390.60,501.38 390.80,501.40 391.00,501.43 391.20,501.46 391.40,501.48 391.60,501.51 391.80,501.53 392.00,501.55 392.20,501.57 392.40,501.59 392.60,501.61 392.80,501.63 393.00,501.65 393.20,501.66 393.40,501.68 393.60,501.70 393.80,501.71 394.00,501.73 394.20,501.74 394.40,501.75 394.60,501.77 394.80,501.78 395.00,501.79 395.20,501.80 395.40,501.81 395.60,501.82 395.80,501.83 396.00,501.84 396.20,501.85 396.40,501.86 396.60,501.87 396.80,501.88 397.00,501.88 397.20,501.89 397.40,501.90 397.60,501.91 397.80,501.91 398.00,501.92 398.20,501.92 398.40,501.93 398.60,501.94 398.80,501.94 399.00,501.95 399.20,501.95 399.40,501.95 399.60,501.96 399.80,501.96 400.00,501.97 400.20,501.97 400.40,501.97 400.60,501.98 400.80,501.98 401.00,501.98 401.20,501.99 401.40,501.99 401.60,501.99 401.80,502.00 402.00,502.00 402.20,502.00 402.40,502.00 402.60,502.00 402.80,502.01 403.00,502.01 403.20,502.01 403.40,502.01 403.60,502.01 403.80,502.02 404.00,502.02 404.20,502.02 404.40,502.02 404.60,502.02 404.80,502.02 405.00,502.02 405.20,502.02 405.40,502.03 405.60,502.03 405.80,502.03 406.00,502.03 406.20,502.03 406.40,502.03 406.60,502.03 406.80,502.03 407.00,502.03 407.20,502.03 407.40,502.03 407.60,502.03 407.80,502.03 408.00,502.03 408.20,502.03 408.40,502.03 408.60,502.03 408.80,502.03 409.00,502.03 409.20,502.03 409.40,502.03 409.60,502.03 409.80,502.03 410.00,502.03 410.20,502.05 410.40,502.05 410.60,502.05 410.80,502.05 411.00,502.05 411.20,502.05 411.40,502.04 411.60,502.02 411.80,501.83 412.00,500.83 412.20,497.28 412.40,489.39 412.60,479.30 412.80,474.40 413.00,477.21 413.20,484.04 413.40,491.50 413.60,497.06 413.80,500.14 414.00,501.45 414.20,501.89 414.40,502.01 414.60,502.03 414.80,502.04 415.00,502.04 415.20,502.03 415.40,502.03 415.60,502.03 415.80,502.03 416.00,502.03 416.20,502.03 416.40,502.03 416.60,502.03 416.80,502.03 417.00,502.03 417.20,502.03 417.40,502.03 417.60,502.03 417.80,502.03 418.00,502.03 418.20,502.03 418.40,502.03 418.60,502.02 418.80,502.02 419.00,502.02 419.20,502.02 419.40,502.02 419.60,502.02 419.80,502.02 420.00,502.02 420.20,502.02 420.40,502.02 420.60,502.02 420.80,502.02 421.00,502.02 421.20,502.02 421.40,502.02 421.60,502.02 421.80,502.02 422.00,502.01 422.20,502.01 422.40,502.01 422.60,502.01 422.80,502.01 423.00,502.01 423.20,502.01 423.40,502.01 423.60,502.01 423.80,502.01 424.00,502.01 424.20,502.01 424.40,502.01 424.60,502.01 424.80,502.01 425.00,502.01 425.20,502.01 425.40,502.01 425.60,502.00 425.80,502.00 426.00,502.00 426.20,502.00 426.40,502.00 426.60,502.00 426.80,502.00 427.00,502.00 427.20,502.00 427.40,502.00 427.60,502.00 427.80,502.00 428.00,502.00 428.20,502.00 428.40,502.00 428.60,502.00 428.80,502.00 429.00,501.99 429.20,501.99 429.40,501.99 429.60,501.99 429.80,501.99 430.00,501.99 430.20,501.78 430.40,501.82 430.60,501.89 430.80,501.97 431.00,502.04 431.20,502.09 431.40,502.12 431.60,502.11 431.80,502.09 432.00,502.05 432.20,502.01 432.40,501.98 432.60,501.96 432.80,501.97 433.00,501.98 433.20,502.00 433.40,502.01 433.60,502.01 433.80,501.99 434.00,501.95 434.20,501.91 434.40,501.87 434.60,501.84 434.80,501.84 435.00,501.87 435.20,501.93 435.40,502.00 435.60,502.08 435.80,502.15 436.00,502.19 436.20,502.20 436.40,502.16 436.60,502.09 436.80,501.99 437.00,501.88 437.20,501.80 437.40,501.74 437.60,501.72 437.80,501.73 438.00,501.76 438.20,501.76 438.40,501.68 438.60,501.41 438.80,500.91 439.00,500.12 439.20,499.14 439.40,498.12 439.60,497.32 439.80,496.95 440.00,496.97 440.20,497.20 440.40,497.54 440.60,497.87 440.80,498.09 441.00,498.18 441.20,498.23 441.40,498.34 441.60,498.60 441.80,498.94 442.00,499.34 442.20,499.80 442.40,500.27 442.60,500.72 442.80,501.13 443.00,501.47 443.20,501.73 443.40,501.91 443.60,502.02 443.80,502.06 444.00,502.05 444.20,501.99 444.40,501.90 444.60,501.82 444.80,501.75 445.00,501.71 445.20,501.71 445.40,501.76 445.60,501.84 445.80,501.94 446.00,502.03 446.20,502.07 446.40,502.01 446.60,501.76 446.80,501.17 447.00,500.07 447.20,498.29 447.40,495.80 447.60,492.83 447.80,489.90 448.00,487.73 448.20,486.95 448.40,487.44 448.60,488.75 448.80,490.66 449.00,492.86 449.20,495.07 449.40,497.04 449.60,498.64 449.80,499.84 450.00,500.68 450.20,501.23 450.40,501.57 450.60,501.78 450.80,501.91 451.00,501.98 451.20,502.02 451.40,502.01 451.60,501.98 451.80,501.92 452.00,501.86 452.20,501.79 452.40,501.74 452.60,501.72 452.80,501.74 453.00,501.80 453.20,501.88 453.40,501.98 453.60,502.07 453.80,502.14 454.00,502.17 454.20,502.16 454.40,502.10 454.60,502.01 454.80,501.91 455.00,501.81 455.20,501.74 455.40,501.70 455.60,501.70 455.80,501.74 456.00,501.81 456.20,501.88 456.40,501.96 456.60,502.02 456.80,502.05 457.00,502.05 457.20,502.02 457.40,501.98 457.60,501.94 457.80,501.91 458.00,501.89 458.20,501.89 458.40,501.90 458.60,501.92 458.80,501.93 459.00,501.93 459.20,501.92 459.40,501.88 459.60,501.83 459.80,501.76 460.00,501.66 460.20,501.51 460.40,501.26 460.60,500.87 460.80,500.31 461.00,499.63 461.20,498.94 461.40,498.42 461.60,498.21 461.80,498.27 462.00,498.47 462.20,498.74 462.40,498.99 462.60,499.14 462.80,499.16 463.00,499.08 463.20,499.00 463.40,499.04 463.60,499.26 463.80,499.58 464.00,499.97 464.20,500.39 464.40,500.79 464.60,501.13 464.80,501.38 465.00,501.54 465.20,501.64 465.40,501.69 465.60,501.72 465.80,501.75 466.00,501.78 466.20,501.81 466.40,501.85 466.60,501.87 466.80,501.89 467.00,501.88 467.20,501.87 467.40,501.84 467.60,501.81 467.80,501.78 468.00,501.73 468.20,501.64 468.40,501.48 468.60,501.20 468.80,500.82 469.00,500.37 469.20,499.95 469.40,499.66 469.60,499.58 469.80,499.63 470.00,499.80 470.20,500.05 470.40,500.36 470.60,500.69 470.80,501.02 471.00,501.32 471.20,501.59 471.40,501.80 471.60,501.94 471.80,502.01 472.00,501.99 472.20,501.85 472.40,501.57 472.60,501.16 472.80,500.64 473.00,500.09 473.20,499.62 473.40,499.36 473.60,499.36 473.80,499.54 474.00,499.85 474.20,500.23 474.40,500.62 474.60,500.98 474.80,501.27 475.00,501.48 475.20,501.62 475.40,501.71 475.60,501.77 475.80,501.82 476.00,501.86 476.20,501.90 476.40,501.94 476.60,501.95 476.80,501.95 477.00,501.92 477.20,501.86 477.40,501.80 477.60,501.73 477.80,501.68 478.00,501.65 478.20,501.67 478.40,501.71 478.60,501.79 478.80,501.89 479.00,501.98 479.20,502.05 479.40,502.08 479.60,502.06 479.80,501.95 480.00,501.74 480.20,501.39 480.40,500.85 480.60,500.10 480.80,499.18 481.00,498.20 481.20,497.38 481.40,496.94 481.60,496.99 481.80,497.35 482.00,497.92 482.20,498.61 482.40,499.28 482.60,499.82 482.80,500.12 483.00,500.10 483.20,499.73 483.40,499.06 483.60,498.23 483.80,497.47 484.00,497.03 484.20,497.04 484.40,497.33 484.60,497.85 484.80,498.49 485.00,499.17 485.20,499.81 485.40,500.31 485.60,500.39 485.80,499.11 486.00,494.78 486.20,487.08 486.40,480.27 486.60,479.91 486.80,484.23 487.00,490.46 487.20,495.93 487.40,499.38 487.60,500.99 487.80,501.53 488.00,501.62 488.20,501.60 488.40,501.57 488.60,501.59 488.80,501.64 489.00,501.73 489.20,501.82 489.40,501.92 489.60,501.98 489.80,502.02 490.00,502.01 490.20,501.98 490.40,501.92 490.60,501.85 490.80,501.78 491.00,501.74 491.20,501.72 491.40,501.72 491.60,501.74 491.80,501.77 492.00,501.80 492.20,501.81 492.40,501.81 492.60,501.80 492.80,501.78 493.00,501.76 493.20,501.75 493.40,501.76 493.60,501.79 493.80,501.84 494.00,501.89 494.20,501.94 494.40,501.97 494.60,501.97 494.80,501.94 495.00,501.88 495.20,501.79 495.40,501.70 495.60,501.62 495.80,501.57 496.00,501.56 496.20,501.60 496.40,501.67 496.60,501.76 496.80,501.87 497.00,501.96 497.20,502.02 497.40,502.04 497.60,502.02 497.80,501.96 498.00,501.87 498.20,501.78 498.40,501.70 498.60,501.64 498.80,501.62 499.00,501.63 499.20,501.67 499.40,501.72 499.60,501.77 499.80,501.82 500.00,501.85 500.20,501.85 500.40,501.84 500.60,501.82 500.80,501.80 501.00,501.79 501.20,501.79 501.40,501.81 501.60,501.83 501.80,501.86 502.00,501.88 502.20,501.87 502.40,501.85 502.60,501.80 502.80,501.73 503.00,501.67 503.20,501.61 503.40,501.58 503.60,501.59 503.80,501.63 504.00,501.71 504.20,501.80 504.40,501.90 504.60,501.97 504.80,502.02 505.00,502.02 505.20,501.98 505.40,501.90 505.60,501.80 505.80,501.70 506.00,501.61 506.20,501.56 506.40,501.54 506.60,501.57 506.80,501.63 507.00,501.71 507.20,501.79 507.40,501.86 507.60,501.90 507.80,501.91 508.00,501.89 508.20,501.85 508.40,501.81 508.60,501.77 508.80,501.74 509.00,501.73 509.20,501.74 509.40,501.76 509.60,501.77 509.80,501.78 510.00,501.77 510.20,501.75 510.40,501.70 510.60,501.63 510.80,501.52 511.00,501.33 511.20,500.99 511.40,500.42 511.60,499.55 511.80,498.40 512.00,497.12 512.20,495.99 512.40,495.30 512.60,495.22 512.80,495.51 513.00,496.03 513.20,496.61 513.40,497.09 513.60,497.31 513.80,497.24 514.00,496.94 514.20,496.62 514.40,496.53 514.60,496.79 514.80,497.28 515.00,497.92 515.20,498.63 515.40,499.22 515.60,499.11 515.80,496.97 516.00,491.43 516.20,484.13 516.40,480.62 516.60,482.84 516.80,488.04 517.00,493.71 517.20,497.94 517.40,500.29 517.60,501.30 517.80,501.63 518.00,501.71 518.20,501.71 518.40,501.69 518.60,501.68 518.80,501.69 519.00,501.71 519.20,501.75 519.40,501.81 519.60,501.86 519.80,501.89 520.00,501.90 520.20,501.85 520.40,501.65 520.60,500.56 520.80,496.03 521.00,483.44 521.20,461.92 521.40,442.99 521.60,441.71 521.80,453.31 522.00,470.23 522.20,485.25 522.40,494.86 522.60,499.54 522.80,501.30 523.00,501.80 523.20,501.87 523.40,501.81 523.60,501.72 523.80,501.64 524.00,501.57 524.20,501.54 524.40,501.55 524.60,501.58 524.80,501.64 525.00,501.69 525.20,501.74 525.40,501.77 525.60,501.78 525.80,501.77 526.00,501.75 526.20,501.73 526.40,501.71 526.60,501.69 526.80,501.68 527.00,501.64 527.20,501.55 527.40,501.37 527.60,501.10 527.80,500.74 528.00,500.37 528.20,500.06 528.40,499.90 528.60,499.89 528.80,500.00 529.00,500.22 529.20,500.50 529.40,500.82 529.60,501.14 529.80,501.42 530.00,501.65 530.20,501.79 530.40,501.87 530.60,501.87 530.80,501.82 531.00,501.73 531.20,501.63 531.40,501.55 531.60,501.49 531.80,501.47 532.00,501.49 532.20,501.55 532.40,501.62 532.60,501.70 532.80,501.77 533.00,501.82 533.20,501.84 533.40,501.82 533.60,501.79 533.80,501.75 534.00,501.70 534.20,501.67 534.40,501.66 534.60,501.66 534.80,501.68 535.00,501.69 535.20,501.71 535.40,501.70 535.60,501.68 535.80,501.65 536.00,501.61 536.20,501.57 536.40,501.56 536.60,501.56 536.80,501.60 537.00,501.65 537.20,501.72 537.40,501.78 537.60,501.79 537.80,501.74 538.00,501.60 538.20,501.36 538.40,501.04 538.60,500.71 538.80,500.44 539.00,500.30 539.20,500.29 539.40,500.39 539.60,500.58 539.80,500.83 540.00,501.10 540.20,501.35 540.40,501.56 540.60,501.70 540.80,501.77 541.00,501.78 541.20,501.73 541.40,501.63 541.60,501.47 541.80,501.23 542.00,500.90 542.20,500.47 542.40,499.96 542.60,499.47 542.80,499.12 543.00,499.00 543.20,499.09 543.40,499.31 543.60,499.62 543.80,499.99 544.00,500.37 544.20,500.72 544.40,501.04 544.60,501.29 544.80,501.50 545.00,501.65 545.20,501.74 545.40,501.78 545.60,501.74 545.80,501.43 546.00,500.18 546.20,496.76 546.40,490.96 546.60,485.87 546.80,485.49 547.00,488.58 547.20,493.12 547.40,497.18 547.60,499.82 547.80,501.14 548.00,501.67 548.20,501.83 548.40,501.82 548.60,501.67 548.80,501.34 549.00,500.71 549.20,499.62 549.40,497.91 549.60,495.53 549.80,492.71 550.00,489.93 550.20,487.89 550.40,487.17 550.60,487.65 550.80,488.91 551.00,490.73 551.20,492.84 551.40,494.94 551.60,496.84 551.80,498.40 552.00,499.59 552.20,500.43 552.40,500.99 552.60,501.34 552.80,501.54 553.00,501.64 553.20,501.67 553.40,501.65 553.60,501.60 553.80,501.54 554.00,501.48 554.20,501.45 554.40,501.44 554.60,501.47 554.80,501.54 555.00,501.62 555.20,501.72 555.40,501.80 555.60,501.86 555.80,501.88 556.00,501.85 556.20,501.78 556.40,501.68 556.60,501.58 556.80,501.49 557.00,501.42 557.20,501.39 557.40,501.41 557.60,501.46 557.80,501.54 558.00,501.62 558.20,501.69 558.40,501.74 558.60,501.77 558.80,501.76 559.00,501.73 559.20,501.68 559.40,501.64 559.60,501.60 559.80,501.58 560.00,501.58 560.20,501.60 560.40,501.62 560.60,501.63 560.80,501.63 561.00,501.61 561.20,501.58 561.40,501.54 561.60,501.51 561.80,501.49 562.00,501.49 562.20,501.52 562.40,501.58 562.60,501.65 562.80,501.72 563.00,501.79 563.20,501.82 563.40,501.78 563.60,501.49 563.80,500.33 564.00,497.17 564.20,491.83 564.40,487.13 564.60,486.76 564.80,489.57 565.00,493.71 565.20,497.42 565.40,499.83 565.60,501.04 565.80,501.49 566.00,501.54 566.20,501.30 566.40,500.76 566.60,499.84 566.80,498.54 567.00,496.98 567.20,495.45 567.40,494.31 567.60,493.89 567.80,494.12 568.00,494.78 568.20,495.72 568.40,496.76 568.60,497.68 568.80,498.30 569.00,498.47 569.20,498.14 569.40,497.40 569.60,496.44 569.80,495.53 570.00,494.89 570.20,494.50 570.40,494.25 570.60,494.20 570.80,494.44 571.00,495.02 571.20,495.81 571.40,496.61 571.60,497.33 571.80,497.84 572.00,498.05 572.20,497.93 572.40,497.51 572.60,496.93 572.80,496.39 573.00,496.05 573.20,495.89 573.40,495.80 573.60,495.85 573.80,496.08 574.00,496.55 574.20,497.18 574.40,497.85 574.60,498.52 574.80,499.16 575.00,499.73 575.20,500.21 575.40,500.57 575.60,500.77 575.80,500.77 576.00,500.54 576.20,500.07 576.40,499.44 576.60,498.76 576.80,498.23 577.00,498.01 577.20,498.08 577.40,498.32 577.60,498.66 577.80,498.99 578.00,499.19 578.20,499.19 578.40,498.99 578.60,498.68 578.80,498.40 579.00,498.32 579.20,498.42 579.40,498.67 579.60,499.03 579.80,499.48 580.00,499.96 580.20,500.43 580.40,500.85 580.60,501.19 580.80,501.45 581.00,501.62 581.20,501.69 581.40,501.64 581.60,501.47 581.80,501.14 582.00,500.63 582.20,499.97 582.40,499.20 582.60,498.48 582.80,497.97 583.00,497.83 583.20,498.01 583.40,498.39 583.60,498.91 583.80,499.48 584.00,500.03 584.20,500.48 584.40,500.81 584.60,500.98 584.80,500.99 585.00,500.86 585.20,500.58 585.40,500.23 585.60,499.86 585.80,499.60 586.00,499.51 586.20,499.57 586.40,499.74 586.60,499.96 586.80,500.23 587.00,500.49 587.20,500.74 587.40,500.96 587.60,501.15 587.80,501.32 588.00,501.46 588.20,501.56 588.40,501.61 588.60,501.56 588.80,501.40 589.00,501.08 589.20,500.60 589.40,500.01 589.60,499.42 589.80,498.96 590.00,498.77 590.20,498.83 590.40,499.07 590.60,499.45 590.80,499.91 591.00,500.39 591.20,500.81 591.40,501.14 591.60,501.38 591.80,501.50 592.00,501.54 592.20,501.51 592.40,501.44 592.60,501.32 592.80,501.14 593.00,500.90 593.20,500.59 593.40,500.22 593.60,499.86 593.80,499.60 594.00,499.51 594.20,499.57 594.40,499.73 594.60,499.96 594.80,500.24 595.00,500.53 595.20,500.81 595.40,501.06 595.60,501.27 595.80,501.43 596.00,501.54 596.20,501.59 596.40,501.56 596.60,501.44 596.80,501.21 597.00,500.84 597.20,500.35 597.40,499.79 597.60,499.27 597.80,498.91 598.00,498.82 598.20,498.97 598.40,499.29 598.60,499.70 598.80,500.15 599.00,500.57 599.20,500.91 599.40,501.15 599.60,501.28 599.80,501.33 600.00,501.33 600.20,501.31 600.40,501.28 600.60,501.28 600.80,501.31 601.00,501.35 601.20,501.41 601.40,501.46 601.60,501.50 601.80,501.51 602.00,501.51 602.20,501.49 602.40,501.46 602.60,501.43 602.80,501.41 603.00,501.41 603.20,501.41 603.40,501.42 603.60,501.41 603.80,501.33 604.00,501.10 604.20,500.62 604.40,499.73 604.60,498.29 604.80,496.28 605.00,493.88 605.20,491.52 605.40,489.79 605.60,489.18 605.80,489.62 606.00,490.73 606.20,492.31 606.40,494.13 606.60,495.92 606.80,497.50 607.00,498.74 607.20,499.59 607.40,500.09 607.60,500.23 607.80,500.06 608.00,499.57 608.20,498.80 608.40,497.86 608.60,496.93 608.80,496.25 609.00,496.05 609.20,496.26 609.40,496.73 609.60,497.38 609.80,498.11 610.00,498.83 610.20,499.47 610.40,499.99 610.60,500.37 610.80,500.62 611.00,500.74 611.20,500.71 611.40,500.50 611.60,500.11 611.80,499.55 612.00,498.90 612.20,498.32 612.40,497.96 612.60,497.91 612.80,498.08 613.00,498.42 613.20,498.89 613.40,499.42 613.60,499.92 613.80,500.36 614.00,500.69 614.20,500.89 614.40,500.95 614.60,500.85 614.80,500.60 615.00,500.18 615.20,499.61 615.40,498.96 615.60,498.36 615.80,497.94 616.00,497.83 616.20,498.01 616.40,498.36 616.60,498.81 616.80,499.31 617.00,499.77 617.20,500.14 617.40,500.38 617.60,500.48 617.80,500.44 618.00,500.27 618.20,499.97 618.40,499.61 618.60,499.26 618.80,499.02 619.00,498.95 619.20,499.03 619.40,499.21 619.60,499.45 619.80,499.71 620.00,499.95 620.20,500.16 620.40,500.31 620.60,500.36 620.80,500.29 621.00,500.08 621.20,499.71 621.40,499.23 621.60,498.71 621.80,498.30 622.00,498.11 622.20,498.13 622.40,498.28 622.60,498.54 622.80,498.87 623.00,499.22 623.20,499.56 623.40,499.83 623.60,500.00 623.80,499.99 624.00,499.77 624.20,499.31 624.40,498.67 624.60,497.98 624.80,497.41 625.00,497.15 625.20,497.16 625.40,497.36 625.60,497.71 625.80,498.12 626.00,498.47 626.20,498.63 626.40,498.47 626.60,497.91 626.80,496.97 627.00,495.83 627.20,494.77 627.40,494.13 627.60,494.09 627.80,494.46 628.00,495.15 628.20,496.04 628.40,497.03 628.60,497.97 628.80,498.79 629.00,499.44 629.20,499.89 629.40,500.15 629.60,500.22 629.80,500.10 630.00,499.81 630.20,499.37 630.40,498.83 630.60,498.32 630.80,497.97 631.00,497.87 631.20,498.02 631.40,498.32 631.60,498.72 631.80,499.15 632.00,499.54 632.20,499.84 632.40,500.01 632.60,500.02 632.80,499.86 633.00,499.51 633.20,499.01 633.40,498.41 633.60,497.85 633.80,497.46 634.00,497.37 634.20,497.54 634.40,497.86 634.60,498.29 634.80,498.75 635.00,499.18 635.20,499.54 635.40,499.79 635.60,499.94 635.80,499.97 636.00,499.84 636.20,499.52 636.40,498.95 636.60,498.12 636.80,497.10 637.00,496.08 637.20,495.30 637.40,494.99 637.60,495.11 637.80,495.52 638.00,496.15 638.20,496.91 638.40,497.70 638.60,498.44 638.80,499.08 639.00,499.59 639.20,499.96 639.40,500.20 639.60,500.33 639.80,500.36 640.00,500.33 640.20,500.25 640.40,500.11 640.60,499.74 640.80,498.45 641.00,494.99 641.20,489.12 641.40,483.96 641.60,483.61 641.80,486.71 642.00,491.15 642.20,494.94 642.40,497.16 642.60,497.99 642.80,498.11 643.00,498.06 643.20,498.08 643.40,498.19 643.60,498.40 643.80,498.68 644.00,498.99 644.20,499.29 644.40,499.56 644.60,499.76 644.80,499.90 645.00,499.98 645.20,500.01 645.40,499.98 645.60,499.92 645.80,499.80 646.00,499.63 646.20,499.40 646.40,499.14 646.60,498.89 646.80,498.70 647.00,498.64 647.20,498.66 647.40,498.71 647.60,498.75 647.80,498.71 648.00,498.57 648.20,498.29 648.40,497.92 648.60,497.55 648.80,497.31 649.00,497.30 649.20,497.50 649.40,497.82 649.60,498.22 649.80,498.64 650.00,499.02 650.20,499.32 650.40,499.51 650.60,499.62 650.80,499.65 651.00,499.62 651.20,499.55 651.40,499.43 651.60,499.24 651.80,498.96 652.00,498.59 652.20,498.18 652.40,497.82 652.60,497.61 652.80,497.60 653.00,497.72 653.20,497.94 653.40,498.23 653.60,498.55 653.80,498.87 654.00,499.16 654.20,499.39 654.40,499.57 654.60,499.69 654.80,499.76 655.00,499.77 655.20,499.73 655.40,499.66 655.60,499.55 655.80,499.41 656.00,499.25 656.20,499.05 656.40,498.85 656.60,498.69 656.80,498.60 657.00,498.62 657.20,498.72 657.40,498.86 657.60,499.01 657.80,499.13 658.00,499.23 658.20,499.28 658.40,499.30 658.60,499.31 658.80,499.31 659.00,499.33 659.20,499.37 659.40,499.42 659.60,499.44 659.80,499.41 660.00,499.30 660.20,499.09 660.40,498.79 660.60,498.46 660.80,498.19 661.00,498.05 661.20,498.05 661.40,498.15 661.60,498.33 661.80,498.57 662.00,498.82 662.20,499.04 662.40,499.23 662.60,499.34 662.80,499.37 663.00,499.31 663.20,499.13 663.40,498.79 663.60,498.29 663.80,497.66 664.00,496.98 664.20,496.41 664.40,496.11 664.60,496.16 664.80,496.42 665.00,496.83 665.20,497.30 665.40,497.78 665.60,498.20 665.80,498.53 666.00,498.78 666.20,498.94 666.40,499.05 666.60,499.12 666.80,499.16 667.00,499.15 667.20,499.10 667.40,499.00 667.60,498.88 667.80,498.77 668.00,498.71 668.20,498.71 668.40,498.73 668.60,498.79 668.80,498.87 669.00,498.96 669.20,499.07 669.40,499.18 669.60,499.28 669.80,499.36 670.00,499.40 670.20,499.37 670.40,499.24 670.60,498.97 670.80,498.54 671.00,497.97 671.20,497.36 671.40,496.82 671.60,496.53 671.80,496.54 672.00,496.76 672.20,497.13 672.40,497.58 672.60,498.03 672.80,498.44 673.00,498.75 673.20,498.97 673.40,499.09 673.60,499.15 673.80,499.19 674.00,499.21 674.20,499.25 674.40,499.29 674.60,499.32 674.80,499.28 675.00,499.15 675.20,498.90 675.40,498.53 675.60,498.13 675.80,497.78 676.00,497.59 676.20,497.55 676.40,497.63 676.60,497.82 676.80,498.07 677.00,498.37 677.20,498.67 677.40,498.95 677.60,499.17 677.80,499.34 678.00,499.45 678.20,499.50 678.40,499.49 678.60,499.43 678.80,499.30 679.00,499.11 679.20,498.87 679.40,498.59 679.60,498.32 679.80,498.13 680.00,498.07 680.20,498.11 680.40,498.22 680.60,498.37 680.80,498.53 681.00,498.68 681.20,498.82 681.40,498.95 681.60,499.07 681.80,499.19 682.00,499.31 682.20,499.43 682.40,499.54 682.60,499.62 682.80,499.68 683.00,499.68 683.20,499.64 683.40,499.54 683.60,499.39 683.80,499.18 684.00,498.93 684.20,498.63 684.40,498.33 684.60,498.07 684.80,497.92 685.00,497.93 685.20,498.06 685.40,498.25 685.60,498.48 685.80,498.71 686.00,498.91 686.20,499.06 686.40,499.17 686.60,499.23 686.80,499.28 687.00,499.31 687.20,499.34 687.40,499.37 687.60,499.39 687.80,499.41 688.00,499.42 688.20,499.40 688.40,499.36 688.60,499.29 688.80,499.19 689.00,499.07 689.20,498.93 689.40,498.79 689.60,498.66 689.80,498.60 690.00,498.62 690.20,498.70 690.40,498.81 690.60,498.91 690.80,498.99 691.00,499.05 691.20,499.07 691.40,499.07 691.60,499.06 691.80,499.07 692.00,499.10 692.20,499.16 692.40,499.25 692.60,499.35 692.80,499.45 693.00,499.53 693.20,499.57 693.40,499.56 693.60,499.47 693.80,499.32 694.00,499.09 694.20,498.79 694.40,498.46 694.60,498.16 694.80,497.95 695.00,497.89 695.20,497.96 695.40,498.12 695.60,498.32 695.80,498.54 696.00,498.74 696.20,498.91 696.40,499.04 696.60,499.13 696.80,499.20 697.00,499.26 697.20,499.30 697.40,499.32 697.60,499.29 697.80,499.16 698.00,498.91 698.20,498.51 698.40,498.01 698.60,497.48 698.80,497.06 699.00,496.85 699.20,496.86 699.40,497.04 699.60,497.35 699.80,497.74 700.00,498.18 700.20,498.59 700.40,498.94 700.60,499.21 700.80,499.37 701.00,499.45 701.20,499.43 701.40,499.35 701.60,499.20 701.80,498.99 702.00,498.71 702.20,498.38 702.40,498.03 702.60,497.71 702.80,497.50 703.00,497.46 703.20,497.58 703.40,497.77 703.60,498.02 703.80,498.28 704.00,498.52 704.20,498.71 704.40,498.84 704.60,498.89 704.80,498.84 705.00,498.66 705.20,498.35 705.40,497.94 705.60,497.52 705.80,497.18 706.00,497.02 706.20,497.04 706.40,497.18 706.60,497.41 706.80,497.71 707.00,498.04 707.20,498.37 707.40,498.68 707.60,498.95 707.80,499.18 708.00,499.34 708.20,499.43 708.40,499.46 708.60,499.39 708.80,499.25 709.00,499.01 709.20,498.70 709.40,498.36 709.60,498.04 709.80,497.83 710.00,497.78 710.20,497.87 710.40,498.06 710.60,498.30 710.80,498.56 711.00,498.81 711.20,499.00 711.40,499.13 711.60,499.20 711.80,499.22 712.00,499.21 712.20,499.20 712.40,499.19 712.60,499.19 712.80,499.20 713.00,499.22 713.20,499.23 713.40,499.21 713.60,499.16 713.80,499.05 714.00,498.88 714.20,498.65 714.40,498.38 714.60,498.14 714.80,497.99 715.00,497.97 715.20,498.08 715.40,498.25 715.60,498.46 715.80,498.67 716.00,498.85 716.20,498.97 716.40,499.03 716.60,499.04 716.80,499.01 717.00,498.97 717.20,498.95 717.40,498.95 717.60,499.00 717.80,499.07 718.00,499.17 718.20,499.27 718.40,499.36 718.60,499.41 718.80,499.43 719.00,499.40 719.20,499.35 719.40,499.27 719.60,499.19 719.80,499.13 720.00,499.08 720.20,499.07 720.40,499.08 720.60,499.11 720.80,499.15 721.00,499.18 721.20,499.20 721.40,499.20 721.60,499.19 721.80,499.17 722.00,499.16 722.20,499.15 722.40,499.15 722.60,499.18 722.80,499.22 723.00,499.26 723.20,499.28 723.40,499.28 723.60,499.22 723.80,499.10 724.00,498.90 724.20,498.63 724.40,498.32 724.60,498.04 724.80,497.84 725.00,497.78 725.20,497.87 725.40,498.05 725.60,498.29 725.80,498.56 726.00,498.80 726.20,499.00 726.40,499.12 726.60,499.17 726.80,499.16 727.00,499.10 727.20,499.03 727.40,498.97 727.60,498.93 727.80,498.92 728.00,498.95 728.20,499.00 728.40,499.07 728.60,499.13 728.80,499.17 729.00,499.20 729.20,499.19 729.40,499.16 729.60,499.11 729.80,499.04 730.00,498.95 730.20,498.86 730.40,498.75 730.60,498.65 730.80,498.59 731.00,498.57 731.20,498.57 731.40,498.60 731.60,498.62 731.80,498.65 732.00,498.68 732.20,498.72 732.40,498.77 732.60,498.84 732.80,498.92 733.00,499.02 733.20,499.13 733.40,499.22 733.60,499.28 733.80,499.30 734.00,499.28 734.20,499.22 734.40,499.13 734.60,499.02 734.80,498.92 735.00,498.85 735.20,498.81 735.40,498.82 735.60,498.87 735.80,498.94 736.00,499.03 736.20,499.11 736.40,499.17 736.60,499.20 736.80,499.19 737.00,499.16 737.20,499.11 737.40,499.06 737.60,499.01 737.80,498.98 738.00,498.96 738.20,498.96 738.40,498.95 738.60,498.91 738.80,498.81 739.00,498.64 739.20,498.37 739.40,498.05 739.60,497.73 739.80,497.48 740.00,497.40 740.20,497.46 740.40,497.63 740.60,497.88 740.80,498.17 741.00,498.45 741.20,498.69 741.40,498.85 741.60,498.94 741.80,498.95 742.00,498.92 742.20,498.85 742.40,498.78 742.60,498.73 742.80,498.72 743.00,498.75 743.20,498.81 743.40,498.88 743.60,498.95 743.80,498.97 744.00,498.92 744.20,498.79 744.40,498.58 744.60,498.35 744.80,498.13 745.00,498.00 745.20,497.96 745.40,497.99 745.60,498.09 745.80,498.24 746.00,498.40 746.20,498.57 746.40,498.71 746.60,498.81 746.80,498.87 747.00,498.90 747.20,498.90 747.40,498.90 747.60,498.89 747.80,498.90 748.00,498.92 748.20,498.95 748.40,498.98 748.60,498.99 748.80,498.97 749.00,498.89 749.20,498.76 749.40,498.58 749.60,498.38 749.80,498.21 750.00,498.11 750.20,498.09 750.40,498.15 750.60,498.26 750.80,498.43 751.00,498.62 751.20,498.79 751.40,498.94 751.60,499.04 751.80,499.08 752.00,499.06 752.20,499.00 752.40,498.91 752.60,498.82 752.80,498.74 753.00,498.68 753.20,498.67 753.40,498.69 753.60,498.74 753.80,498.80 754.00,498.87 754.20,498.92 754.40,498.94 754.60,498.95 754.80,498.93 755.00,498.90 755.20,498.87 755.40,498.85 755.60,498.84 755.80,498.85 756.00,498.87 756.20,498.89 756.40,498.90 756.60,498.89 756.80,498.87 757.00,498.82 757.20,498.77 757.40,498.71 757.60,498.67 757.80,498.65 758.00,498.66 758.20,498.71 758.40,498.78 758.60,498.87 758.80,498.96 759.00,499.02 759.20,499.05 759.40,499.03 759.60,498.98 759.80,498.89 760.00,498.78 760.20,498.68 760.40,498.60 760.60,498.56 760.80,498.56 761.00,498.60 761.20,498.67 761.40,498.76 761.60,498.84 761.80,498.91 762.00,498.94 762.20,498.94 762.40,498.92 762.60,498.87 762.80,498.81 763.00,498.76 763.20,498.73 763.40,498.71 763.60,498.71 763.80,498.73 764.00,498.75 764.20,498.76 764.40,498.76 764.60,498.74 764.80,498.71 765.00,498.68 765.20,498.66 765.40,498.65 765.60,498.66 765.80,498.70 766.00,498.76 766.20,498.82 766.40,498.88 766.60,498.93 766.80,498.93 767.00,498.90 767.20,498.84 767.40,498.75 767.60,498.65 767.80,498.56 768.00,498.49 768.20,498.47 768.40,498.49 768.60,498.55 768.80,498.64 769.00,498.74 769.20,498.83 769.40,498.90 769.60,498.93 769.80,498.91 770.00,498.87 770.20,498.79 770.40,498.71 770.60,498.64 770.80,498.58 771.00,498.56 771.20,498.56 771.40,498.58 771.60,498.62 771.80,498.66 772.00,498.69 772.20,498.70 772.40,498.70 772.60,498.68 772.80,498.66 773.00,498.65 773.20,498.65 773.40,498.66 773.60,498.69 773.80,498.73 774.00,498.77 774.20,498.79 774.40,498.79 774.60,498.76 774.80,498.70 775.00,498.62 775.20,498.54 775.40,498.47 775.60,498.43 775.80,498.42 776.00,498.46 776.20,498.53 776.40,498.62 776.60,498.72 776.80,498.81 777.00,498.86 777.20,498.88 777.40,498.84 777.60,498.77 777.80,498.68 778.00,498.58 778.20,498.49 778.40,498.44 778.60,498.41 778.80,498.43 779.00,498.47 779.20,498.54 779.40,498.60 779.60,498.66 779.80,498.69 780.00,498.60 780.20,498.59 780.40,498.58 780.60,498.57 780.80,498.56 781.00,498.55 781.20,498.54 781.40,498.53 781.60,498.52 781.80,498.51 782.00,498.50 782.20,498.49 782.40,498.48 782.60,498.47 782.80,498.46 783.00,498.45 783.20,498.44 783.40,498.43 783.60,498.42 783.80,498.41 784.00,498.40 784.20,498.39 784.40,498.38 784.60,498.37 784.80,498.36 785.00,498.35 785.20,498.34 785.40,498.33 785.60,498.32 785.80,498.31 786.00,498.30 786.20,498.29 786.40,498.28 786.60,498.27 786.80,498.26 787.00,498.25 787.20,498.24 787.40,498.23 787.60,498.22 787.80,498.21 788.00,498.20 788.20,498.19 788.40,498.18 788.60,498.17 788.80,498.16 789.00,498.15 789.20,498.14 789.40,498.13 789.60,498.12 789.80,498.11 790.00,498.10 790.20,498.09 790.40,498.08 790.60,498.07 790.80,498.06 791.00,498.05 791.20,498.04 791.40,498.03 791.60,498.02 791.80,498.01 792.00,498.00 792.20,497.99 792.40,497.98 792.60,497.97 792.80,497.96 793.00,497.95 793.20,497.94 793.40,497.93 793.60,497.92 793.80,497.91 794.00,497.90 794.20,497.89 794.40,497.88 794.60,497.87 794.80,497.86 795.00,497.85 795.20,497.84 795.40,497.83 795.60,497.82 795.80,497.81 796.00,497.80 796.20,497.79 796.40,497.78 796.60,497.77 796.80,497.76 797.00,497.75 797.20,497.74 797.40,497.73 797.60,497.72 797.80,497.71 798.00,497.70 798.20,497.69 798.40,497.68 798.60,497.67 798.80,497.66 799.00,497.65 799.20,497.64 799.40,497.63 799.60,497.62 799.80,497.61 800.00,497.60 800.20,497.59 800.40,497.58 800.60,497.57 800.80,497.56 801.00,497.55 801.20,497.54 801.40,497.53 801.60,497.52 801.80,497.51 802.00,497.50 802.20,497.49 802.40,497.48 802.60,497.47 802.80,497.46 803.00,497.45 803.20,497.44 803.40,497.43 803.60,497.42 803.80,497.41 804.00,497.40 804.20,497.39 804.40,497.38 804.60,497.37 804.80,497.36 805.00,497.35 805.20,497.34 805.40,497.33 805.60,497.32 805.80,497.31 806.00,497.30 806.20,497.29 806.40,497.28 806.60,497.27 806.80,497.26 807.00,497.25 807.20,497.24 807.40,497.23 807.60,497.22 807.80,497.21 808.00,497.20 808.20,497.19 808.40,497.18 808.60,497.17 808.80,497.16 809.00,497.15 809.20,497.14 809.40,497.13 809.60,497.12 809.80,497.11 810.00,497.10 810.20,497.09 810.40,497.08 810.60,497.07 810.80,497.06 811.00,497.05 811.20,497.04 811.40,497.03 811.60,497.02 811.80,497.01 812.00,497.00 812.20,496.99 812.40,496.98 812.60,496.97 812.80,496.96 813.00,496.95 813.20,496.94 813.40,496.93 813.60,496.92 813.80,496.91 814.00,496.90 814.20,496.89 814.40,496.88 814.60,496.87 814.80,496.86 815.00,496.85 815.20,496.84 815.40,496.83 815.60,496.82 815.80,496.81 816.00,496.80 816.20,496.79 816.40,496.78 816.60,496.77 816.80,496.76 817.00,496.75 817.20,496.74 817.40,496.73 817.60,496.72 817.80,496.71 818.00,496.70 818.20,496.69 818.40,496.68 818.60,496.67 818.80,496.66 819.00,496.65 819.20,496.64 819.40,496.63 819.60,496.62 819.80,496.61 820.00,496.60 820.20,496.60 820.40,496.60 820.60,496.60 820.80,496.60 821.00,496.60 821.20,496.60 821.40,496.60 821.60,496.60 821.80,496.60 822.00,496.60 822.20,496.60 822.40,496.60 822.60,496.60 822.80,496.60 823.00,496.60 823.20,496.60 823.40,496.60 823.60,496.60 823.80,496.60 824.00,496.60 824.20,496.60 824.40,496.60 824.60,496.60 824.80,496.60 825.00,496.60 825.20,496.60 825.40,496.60 825.60,496.60 825.80,496.60 826.00,496.60 826.20,496.60 826.40,496.60 826.60,496.60 826.80,496.60 827.00,496.60 827.20,496.60 827.40,496.60 827.60,496.60 827.80,496.60 828.00,496.60 828.20,496.60 828.40,496.60 828.60,496.60 828.80,496.60 829.00,496.60 829.20,496.60 829.40,496.60 829.60,496.60 829.80,496.60 830.00,496.60 830.20,496.60 830.40,496.60 830.60,496.60 830.80,496.60 831.00,496.60 831.20,496.60 831.40,496.60 831.60,496.60 831.80,496.60 832.00,496.60 832.20,496.60 832.40,496.60 832.60,496.60 832.80,496.60 833.00,496.60 833.20,496.60 833.40,496.60 833.60,496.60 833.80,496.60 834.00,496.60 834.20,496.60 834.40,496.60 834.60,496.60 834.80,496.60 835.00,496.60 835.20,496.60 835.40,496.60 835.60,496.60 835.80,496.60 836.00,496.60 836.20,496.60 836.40,496.60 836.60,496.60 836.80,496.60 837.00,496.60 837.20,496.60 837.40,496.60 837.60,496.60 837.80,496.60 838.00,496.60 838.20,496.60 838.40,496.60 838.60,496.60 838.80,496.60 839.00,496.60 839.20,496.60 839.40,496.60 839.60,496.60 839.80,496.60 840.00,496.60 840.20,496.60 840.40,496.60 840.60,496.60 840.80,496.60 841.00,496.60 841.20,496.60 841.40,496.60 841.60,496.60 841.80,496.60 842.00,496.60 842.20,496.60 842.40,496.60 842.60,496.60 842.80,496.60 843.00,496.60 843.20,496.60 843.40,496.60 843.60,496.60 843.80,496.60 844.00,496.60 844.20,496.60 844.40,496.60 844.60,496.60 844.80,496.60 845.00,496.60 845.20,496.60 845.40,496.60 845.60,496.60 845.80,496.60 846.00,496.60 846.20,496.60 846.40,496.60 846.60,496.60 846.80,496.60 847.00,496.60 847.20,496.60 847.40,496.60 847.60,496.60 847.80,496.60 848.00,496.60 848.20,496.60 848.40,496.60 848.60,496.60 848.80,496.60 849.00,496.60 849.20,496.60 849.40,496.60 849.60,496.60 849.80,496.60 850.00,496.60 850.20,496.61 850.40,496.61 850.60,496.62 850.80,496.63 851.00,496.63 851.20,496.64 851.40,496.65 851.60,496.65 851.80,496.66 852.00,496.67 852.20,496.67 852.40,496.68 852.60,496.69 852.80,496.70 853.00,496.70 853.20,496.71 853.40,496.72 853.60,496.72 853.80,496.73 854.00,496.74 854.20,496.74 854.40,496.75 854.60,496.76 854.80,496.76 855.00,496.77 855.20,496.78 855.40,496.78 855.60,496.79 855.80,496.80 856.00,496.80 856.20,496.81 856.40,496.82 856.60,496.82 856.80,496.83 857.00,496.84 857.20,496.84 857.40,496.85 857.60,496.86 857.80,496.87 858.00,496.87 858.20,496.88 858.40,496.89 858.60,496.89 858.80,496.90 859.00,496.91 859.20,496.91 859.40,496.92 859.60,496.93 859.80,496.93 860.00,496.94 860.20,496.95 860.40,496.95 860.60,496.96 860.80,496.97 861.00,496.97 861.20,496.98 861.40,496.99 861.60,496.99 861.80,497.00 862.00,497.01 862.20,497.01 862.40,497.02 862.60,497.03 862.80,497.04 863.00,497.04 863.20,497.05 863.40,497.06 863.60,497.06 863.80,497.07 864.00,497.08 864.20,497.08 864.40,497.09 864.60,497.10 864.80,497.10 865.00,497.11 865.20,497.12 865.40,497.12 865.60,497.13 865.80,497.14 866.00,497.14 866.20,497.15 866.40,497.16 866.60,497.16 866.80,497.17 867.00,497.18 867.20,497.18 867.40,497.19 867.60,497.20 867.80,497.21 868.00,497.21 868.20,497.22 868.40,497.23 868.60,497.23 868.80,497.24 869.00,497.25 869.20,497.25 869.40,497.26 869.60,497.27 869.80,497.27 870.00,497.28 870.20,497.29 870.40,497.29 870.60,497.30 870.80,497.31 871.00,497.31 871.20,497.32 871.40,497.33 871.60,497.33 871.80,497.34 872.00,497.35 872.20,497.35 872.40,497.36 872.60,497.37 872.80,497.38 873.00,497.38 873.20,497.39 873.40,497.40 873.60,497.40 873.80,497.41 874.00,497.42 874.20,497.42 874.40,497.43 874.60,497.44 874.80,497.44 875.00,497.45 875.20,497.46 875.40,497.46 875.60,497.47 875.80,497.48 876.00,497.48 876.20,497.49 876.40,497.50 876.60,497.50 876.80,497.51 877.00,497.52 877.20,497.52 877.40,497.53 877.60,497.54 877.80,497.55 878.00,497.55 878.20,497.56 878.40,497.57 878.60,497.57 878.80,497.58 879.00,497.59 879.20,497.59 879.40,497.60 879.60,497.61 879.80,497.61 880.00,497.62 880.20,497.63 880.40,497.63 880.60,497.64 880.80,497.65 881.00,497.65 881.20,497.66 881.40,497.67 881.60,497.67 881.80,497.68 882.00,497.69 882.20,497.69 882.40,497.70 882.60,497.71 882.80,497.72 883.00,497.72 883.20,497.73 883.40,497.74 883.60,497.74 883.80,497.75 884.00,497.76 884.20,497.76 884.40,497.77 884.60,497.78 884.80,497.78 885.00,497.79 885.20,497.80 885.40,497.80 885.60,497.81 885.80,497.82 886.00,497.82 886.20,497.83 886.40,497.84 886.60,497.84 886.80,497.85 887.00,497.86 887.20,497.86 887.40,497.87 887.60,497.88 887.80,497.89 888.00,497.89 888.20,497.90 888.40,497.91 888.60,497.91 888.80,497.92 889.00,497.93 889.20,497.93 889.40,497.94 889.60,497.95 889.80,497.95 890.00,497.96 890.20,497.97 890.40,497.97 890.60,497.98 890.80,497.99 891.00,497.99 891.20,498.00 891.40,498.01 891.60,498.01 891.80,498.02 892.00,498.03 892.20,498.03 892.40,498.04 892.60,498.05 892.80,498.06 893.00,498.06 893.20,498.07 893.40,498.08 893.60,498.08 893.80,498.09 894.00,498.10 894.20,498.10 894.40,498.11 894.60,498.12 894.80,498.12 895.00,498.13 895.20,498.14 895.40,498.14 895.60,498.15 895.80,498.16 896.00,498.16 896.20,498.17 896.40,498.18 896.60,498.18 896.80,498.19 897.00,498.20 897.20,498.20 897.40,498.21 897.60,498.22 897.80,498.23 898.00,498.23 898.20,498.24 898.40,498.25 898.60,498.25 898.80,498.26 899.00,498.27 899.20,498.27 899.40,498.28 899.60,498.29 899.80,498.29 900.00,498.30 900.20,498.30 900.40,498.30 900.60,498.31 900.80,498.31 901.00,498.31 901.20,498.31 901.40,498.31 901.60,498.31 901.80,498.32 902.00,498.32 902.20,498.32 902.40,498.32 902.60,498.32 902.80,498.33 903.00,498.33 903.20,498.33 903.40,498.33 903.60,498.33 903.80,498.33 904.00,498.34 904.20,498.34 904.40,498.34 904.60,498.34 904.80,498.34 905.00,498.35 905.20,498.35 905.40,498.35 905.60,498.35 905.80,498.35 906.00,498.35 906.20,498.36 906.40,498.36 906.60,498.36 906.80,498.36 907.00,498.36 907.20,498.36 907.40,498.37 907.60,498.37 907.80,498.37 908.00,498.37 908.20,498.37 908.40,498.38 908.60,498.38 908.80,498.38 909.00,498.38 909.20,498.38 909.40,498.38 909.60,498.39 909.80,498.39 910.00,498.39 910.20,498.39 910.40,498.39 910.60,498.40 910.80,498.40 911.00,498.40 911.20,498.40 911.40,498.40 911.60,498.40 911.80,498.41 912.00,498.41 912.20,498.41 912.40,498.41 912.60,498.41 912.80,498.42 913.00,498.42 913.20,498.42 913.40,498.42 913.60,498.42 913.80,498.42 914.00,498.43 914.20,498.43 914.40,498.43 914.60,498.43 914.80,498.43 915.00,498.44 915.20,498.44 915.40,498.44 915.60,498.44 915.80,498.44 916.00,498.44 916.20,498.45 916.40,498.45 916.60,498.45 916.80,498.45 917.00,498.45 917.20,498.45 917.40,498.46 917.60,498.46 917.80,498.46 918.00,498.46 918.20,498.46 918.40,498.47 918.60,498.47 918.80,498.47 919.00,498.47 919.20,498.47 919.40,498.47 919.60,498.48 919.80,498.48 920.00,498.48 920.20,498.48 920.40,498.48 920.60,498.49 920.80,498.49 921.00,498.49 921.20,498.49 921.40,498.49 921.60,498.49 921.80,498.50 922.00,498.50 922.20,498.50 922.40,498.50 922.60,498.50 922.80,498.51 923.00,498.51 923.20,498.51 923.40,498.51 923.60,498.51 923.80,498.51 924.00,498.52 924.20,498.52 924.40,498.52 924.60,498.52 924.80,498.52 925.00,498.53 925.20,498.53 925.40,498.53 925.60,498.53 925.80,498.53 926.00,498.53 926.20,498.54 926.40,498.54 926.60,498.54 926.80,498.54 927.00,498.54 927.20,498.54 927.40,498.55 927.60,498.55 927.80,498.55 928.00,498.55 928.20,498.55 928.40,498.56 928.60,498.56 928.80,498.56 929.00,498.56 929.20,498.56 929.40,498.56 929.60,498.57 929.80,498.57 930.00,498.57 930.20,498.57 930.40,498.57 930.60,498.58 930.80,498.58 931.00,498.58 931.20,498.58 931.40,498.58 931.60,498.58 931.80,498.59 932.00,498.59 932.20,498.59 932.40,498.59 932.60,498.59 932.80,498.60 933.00,498.60 933.20,498.60 933.40,498.60 933.60,498.60 933.80,498.60 934.00,498.61 934.20,498.61 934.40,498.61 934.60,498.61 934.80,498.61 935.00,498.62 935.20,498.62 935.40,498.62 935.60,498.62 935.80,498.62 936.00,498.62 936.20,498.63 936.40,498.63 936.60,498.63 936.80,498.63 937.00,498.63 937.20,498.63 937.40,498.64 937.60,498.64 937.80,498.64 938.00,498.64 938.20,498.64 938.40,498.65 938.60,498.65 938.80,498.65 939.00,498.65 939.20,498.65 939.40,498.65 939.60,498.66 939.80,498.66 940.00,498.66 940.20,498.66 940.40,498.66 940.60,498.67 940.80,498.67 941.00,498.67 941.20,498.67 941.40,498.67 941.60,498.67 941.80,498.68 942.00,498.68 942.20,498.68 942.40,498.68 942.60,498.68 942.80,498.69 943.00,498.69 943.20,498.69 943.40,498.69 943.60,498.69 943.80,498.69 944.00,498.70 944.20,498.70 944.40,498.70 944.60,498.70 944.80,498.70 945.00,498.71 945.20,498.71 945.40,498.71 945.60,498.71 945.80,498.71 946.00,498.71 946.20,498.72 946.40,498.72 946.60,498.72 946.80,498.72 947.00,498.72 947.20,498.72 947.40,498.73 947.60,498.73 947.80,498.73 948.00,498.73 948.20,498.73 948.40,498.74 948.60,498.74 948.80,498.74 949.00,498.74 949.20,498.74 949.40,498.74 949.60,498.75 949.80,498.75 950.00,498.75 950.20,498.75 950.40,498.75 950.60,498.76 950.80,498.76 951.00,498.76 951.20,498.76 951.40,498.76 951.60,498.76 951.80,498.77 952.00,498.77 952.20,498.77 952.40,498.77 952.60,498.77 952.80,498.78 953.00,498.78 953.20,498.78 953.40,498.78 953.60,498.78 953.80,498.78 954.00,498.79 954.20,498.79 954.40,498.79 954.60,498.79 954.80,498.79 955.00,498.80 955.20,498.80 955.40,498.80 955.60,498.80 955.80,498.80 956.00,498.80 956.20,498.81 956.40,498.81 956.60,498.81 956.80,498.81 957.00,498.81 957.20,498.81 957.40,498.82 957.60,498.82 957.80,498.82 958.00,498.82 958.20,498.82 958.40,498.83 958.60,498.83 958.80,498.83 959.00,498.83 959.20,498.83 959.40,498.83 959.60,498.84 959.80,498.84 960.00,498.84 960.20,498.84 960.40,498.84 960.60,498.85 960.80,498.85 961.00,498.85 961.20,498.85 961.40,498.85 961.60,498.85 961.80,498.86 962.00,498.86 962.20,498.86 962.40,498.86 962.60,498.86 962.80,498.87 963.00,498.87 963.20,498.87 963.40,498.87 963.60,498.87 963.80,498.87 964.00,498.88 964.20,498.88 964.40,498.88 964.60,498.88 964.80,498.88 965.00,498.89 965.20,498.89 965.40,498.89 965.60,498.89 965.80,498.89 966.00,498.89 966.20,498.90 966.40,498.90 966.60,498.90 966.80,498.90 967.00,498.90 967.20,498.90 967.40,498.91 967.60,498.91 967.80,498.91 968.00,498.91 968.20,498.91 968.40,498.92 968.60,498.92 968.80,498.92 969.00,498.92 969.20,498.92 969.40,498.92 969.60,498.93 969.80,498.93 970.00,498.93 970.20,498.93 970.40,498.93 970.60,498.94 970.80,498.94 971.00,498.94 971.20,498.94 971.40,498.94 971.60,498.94 971.80,498.95 972.00,498.95 972.20,498.95 972.40,498.95 972.60,498.95 972.80,498.96 973.00,498.96 973.20,498.96 973.40,498.96 973.60,498.96 973.80,498.96 974.00,498.97 974.20,498.97 974.40,498.97 974.60,498.97 974.80,498.97 975.00,498.98 975.20,498.98 975.40,498.98 975.60,498.98 975.80,498.98 976.00,498.98 976.20,498.99 976.40,498.99 976.60,498.99 976.80,498.99 977.00,498.99 977.20,498.99 977.40,499.00 977.60,499.00 977.80,499.00 978.00,499.00 978.20,499.00 978.40,499.01 978.60,499.01 978.80,499.01 979.00,499.01 979.20,499.01 979.40,499.01 979.60,499.02 979.80,499.02 980.00,499.02 980.20,499.02 980.40,499.02 980.60,499.03 980.80,499.03 981.00,499.03 981.20,499.03 981.40,499.03 981.60,499.03 981.80,499.04 982.00,499.04 982.20,499.04 982.40,499.04 982.60,499.04 982.80,499.05 983.00,499.05 983.20,499.05 983.40,499.05 983.60,499.05 983.80,499.05 984.00,499.06 984.20,499.06 984.40,499.06 984.60,499.06 984.80,499.06 985.00,499.07 985.20,499.07 985.40,499.07 985.60,499.07 985.80,499.07 986.00,499.07 986.20,499.08 986.40,499.08 986.60,499.08 986.80,499.08 987.00,499.08 987.20,499.08 987.40,499.09 987.60,499.09 987.80,499.09 988.00,499.09 988.20,499.09 988.40,499.10 988.60,499.10 988.80,499.10 989.00,499.10 989.20,499.10 989.40,499.10 989.60,499.11 989.80,499.11 990.00,499.11 990.20,499.11 990.40,499.11 990.60,499.12 990.80,499.12 991.00,499.12 991.20,499.12 991.40,499.12 991.60,499.12 991.80,499.13 992.00,499.13 992.20,499.13 992.40,499.13 992.60,499.13 992.80,499.14 993.00,499.14 993.20,499.14 993.40,499.14 993.60,499.14 993.80,499.14 994.00,499.15 994.20,499.15 994.40,499.15 994.60,499.15 994.80,499.15 995.00,499.16 995.20,499.16 995.40,499.16 995.60,499.16 995.80,499.16 996.00,499.16 996.20,499.17 996.40,499.17 996.60,499.17 996.80,499.17 997.00,499.17 997.20,499.17 997.40,499.18 997.60,499.18 997.80,499.18 998.00,499.18 998.20,499.18 998.40,499.19 998.60,499.19 998.80,499.19 999.00,499.19 999.20,499.19 999.40,499.19 999.60,499.20 999.80,499.20 1000.00,499.20 1000.20,499.20 1000.40,499.20 1000.60,499.20 1000.80,499.20 1001.00,499.20 1001.20,499.20 1001.40,499.20 1001.60,499.20 1001.80,499.20 1002.00,499.21 1002.20,499.21 1002.40,499.21 1002.60,499.21 1002.80,499.21 1003.00,499.21 1003.20,499.21 1003.40,499.21 1003.60,499.21 1003.80,499.21 1004.00,499.21 1004.20,499.21 1004.40,499.21 1004.60,499.21 1004.80,499.21 1005.00,499.21 1005.20,499.21 1005.40,499.21 1005.60,499.22 1005.80,499.22 1006.00,499.22 1006.20,499.22 1006.40,499.22 1006.60,499.22 1006.80,499.22 1007.00,499.22 1007.20,499.22 1007.40,499.22 1007.60,499.22 1007.80,499.22 1008.00,499.22 1008.20,499.22 1008.40,499.22 1008.60,499.22 1008.80,499.22 1009.00,499.22 1009.20,499.23 1009.40,499.23 1009.60,499.23 1009.80,499.23 1010.00,499.23 1010.20,499.23 1010.40,499.23 1010.60,499.23 1010.80,499.23 1011.00,499.23 1011.20,499.23 1011.40,499.23 1011.60,499.23 1011.80,499.23 1012.00,499.23 1012.20,499.23 1012.40,499.23 1012.60,499.23 1012.80,499.24 1013.00,499.24 1013.20,499.24 1013.40,499.24 1013.60,499.24 1013.80,499.24 1014.00,499.24 1014.20,499.24 1014.40,499.24 1014.60,499.24 1014.80,499.24 1015.00,499.24 1015.20,499.24 1015.40,499.24 1015.60,499.24 1015.80,499.24 1016.00,499.24 1016.20,499.24 1016.40,499.25 1016.60,499.25 1016.80,499.25 1017.00,499.25 1017.20,499.25 1017.40,499.25 1017.60,499.25 1017.80,499.25 1018.00,499.25 1018.20,499.25 1018.40,499.25 1018.60,499.25 1018.80,499.25 1019.00,499.25 1019.20,499.25 1019.40,499.25 1019.60,499.25 1019.80,499.25 1020.00,499.25 1020.20,499.26 1020.40,499.26 1020.60,499.26 1020.80,499.26 1021.00,499.26 1021.20,499.26 1021.40,499.26 1021.60,499.26 1021.80,499.26 1022.00,499.26 1022.20,499.26 1022.40,499.26 1022.60,499.26 1022.80,499.26 1023.00,499.26 1023.20,499.26 1023.40,499.26 1023.60,499.26 1023.80,499.27 1024.00,499.27 1024.20,499.27 1024.40,499.27 1024.60,499.27 1024.80,499.27 1025.00,499.27 1025.20,499.27 1025.40,499.27 1025.60,499.27 1025.80,499.27 1026.00,499.27 1026.20,499.27 1026.40,499.27 1026.60,499.27 1026.80,499.27 1027.00,499.27 1027.20,499.27 1027.40,499.28 1027.60,499.28 1027.80,499.28 1028.00,499.28 1028.20,499.28 1028.40,499.28 1028.60,499.28 1028.80,499.28 1029.00,499.28 1029.20,499.28 1029.40,499.28 1029.60,499.28 1029.80,499.28 1030.00,499.28 1030.20,499.28 1030.40,499.28 1030.60,499.28 1030.80,499.28 1031.00,499.29 1031.20,499.29 1031.40,499.29 1031.60,499.29 1031.80,499.29 1032.00,499.29 1032.20,499.29 1032.40,499.29 1032.60,499.29 1032.80,499.29 1033.00,499.29 1033.20,499.29 1033.40,499.29 1033.60,499.29 1033.80,499.29 1034.00,499.29 1034.20,499.29 1034.40,499.29 1034.60,499.30 1034.80,499.30 1035.00,499.30 1035.20,499.30 1035.40,499.30 1035.60,499.30 1035.80,499.30 1036.00,499.30 1036.20,499.30 1036.40,499.30 1036.60,499.30 1036.80,499.30 1037.00,499.30 1037.20,499.30 1037.40,499.30 1037.60,499.30 1037.80,499.30 1038.00,499.30 1038.20,499.30 1038.40,499.31 1038.60,499.31 1038.80,499.31 1039.00,499.31 1039.20,499.31 1039.40,499.31 1039.60,499.31 1039.80,499.31 1040.00,499.31 1040.20,499.31 1040.40,499.31 1040.60,499.31 1040.80,499.31 1041.00,499.31 1041.20,499.31 1041.40,499.31 1041.60,499.31 1041.80,499.31 1042.00,499.32 1042.20,499.32 1042.40,499.32 1042.60,499.32 1042.80,499.32 1043.00,499.32 1043.20,499.32 1043.40,499.32 1043.60,499.32 1043.80,499.32 1044.00,499.32 1044.20,499.32 1044.40,499.32 1044.60,499.32 1044.80,499.32 1045.00,499.32 1045.20,499.32 1045.40,499.32 1045.60,499.33 1045.80,499.33 1046.00,499.33 1046.20,499.33 1046.40,499.33 1046.60,499.33 1046.80,499.33 1047.00,499.33 1047.20,499.33 1047.40,499.33 1047.60,499.33 1047.80,499.33 1048.00,499.33 1048.20,499.33 1048.40,499.33 1048.60,499.33 1048.80,499.33 1049.00,499.33 1049.20,499.34 1049.40,499.34 1049.60,499.34 1049.80,499.34 1050.00,499.34 1050.20,499.34 1050.40,499.34 1050.60,499.34 1050.80,499.34 1051.00,499.34 1051.20,499.34 1051.40,499.34 1051.60,499.34 1051.80,499.34 1052.00,499.34 1052.20,499.34 1052.40,499.34 1052.60,499.34 1052.80,499.35 1053.00,499.35 1053.20,499.35 1053.40,499.35 1053.60,499.35 1053.80,499.35 1054.00,499.35 1054.20,499.35 1054.40,499.35 1054.60,499.35 1054.80,499.35 1055.00,499.35 1055.20,499.35 1055.40,499.35 1055.60,499.35 1055.80,499.35 1056.00,499.35 1056.20,499.35 1056.40,499.35 1056.60,499.36 1056.80,499.36 1057.00,499.36 1057.20,499.36 1057.40,499.36 1057.60,499.36 1057.80,499.36 1058.00,499.36 1058.20,499.36 1058.40,499.36 1058.60,499.36 1058.80,499.36 1059.00,499.36 1059.20,499.36 1059.40,499.36 1059.60,499.36 1059.80,499.36 1060.00,499.36 1060.20,499.37 1060.40,499.37 1060.60,499.37 1060.80,499.37 1061.00,499.37 1061.20,499.37 1061.40,499.37 1061.60,499.37 1061.80,499.37 1062.00,499.37 1062.20,499.37 1062.40,499.37 1062.60,499.37 1062.80,499.37 1063.00,499.37 1063.20,499.37 1063.40,499.37 1063.60,499.37 1063.80,499.38 1064.00,499.38 1064.20,499.38 1064.40,499.38 1064.60,499.38 1064.80,499.38 1065.00,499.38 1065.20,499.38 1065.40,499.38 1065.60,499.38 1065.80,499.38 1066.00,499.38 1066.20,499.38 1066.40,499.38 1066.60,499.38 1066.80,499.38 1067.00,499.38 1067.20,499.38 1067.40,499.39 1067.60,499.39 1067.80,499.39 1068.00,499.39 1068.20,499.39 1068.40,499.39 1068.60,499.39 1068.80,499.39 1069.00,499.39 1069.20,499.39 1069.40,499.39 1069.60,499.39 1069.80,499.39 1070.00,499.39 1070.20,499.39 1070.40,499.39 1070.60,499.39 1070.80,499.39 1071.00,499.40 1071.20,499.40 1071.40,499.40 1071.60,499.40 1071.80,499.40 1072.00,499.40 1072.20,499.40 1072.40,499.40 1072.60,499.40 1072.80,499.40 1073.00,499.40 1073.20,499.40 1073.40,499.40 1073.60,499.40 1073.80,499.40 1074.00,499.40 1074.20,499.40 1074.40,499.40 1074.60,499.40 1074.80,499.41 1075.00,499.41 1075.20,499.41 1075.40,499.41 1075.60,499.41 1075.80,499.41 1076.00,499.41 1076.20,499.41 1076.40,499.41 1076.60,499.41 1076.80,499.41 1077.00,499.41 1077.20,499.41 1077.40,499.41 1077.60,499.41 1077.80,499.41 1078.00,499.41 1078.20,499.41 1078.40,499.42 1078.60,499.42 1078.80,499.42 1079.00,499.42 1079.20,499.42 1079.40,499.42 1079.60,499.42 1079.80,499.42 1080.00,499.42 1080.20,499.42 1080.40,499.42 1080.60,499.42 1080.80,499.42 1081.00,499.42 1081.20,499.42 1081.40,499.42 1081.60,499.42 1081.80,499.42 1082.00,499.43 1082.20,499.43 1082.40,499.43 1082.60,499.43 1082.80,499.43 1083.00,499.43 1083.20,499.43 1083.40,499.43 1083.60,499.43 1083.80,499.43 1084.00,499.43 1084.20,499.43 1084.40,499.43 1084.60,499.43 1084.80,499.43 1085.00,499.43 1085.20,499.43 1085.40,499.43 1085.60,499.44 1085.80,499.44 1086.00,499.44 1086.20,499.44 1086.40,499.44 1086.60,499.44 1086.80,499.44 1087.00,499.44 1087.20,499.44 1087.40,499.44 1087.60,499.44 1087.80,499.44 1088.00,499.44 1088.20,499.44 1088.40,499.44 1088.60,499.44 1088.80,499.44 1089.00,499.44 1089.20,499.45 1089.40,499.45 1089.60,499.45 1089.80,499.45 1090.00,499.45 1090.20,499.45 1090.40,499.45 1090.60,499.45 1090.80,499.45 1091.00,499.45 1091.20,499.45 1091.40,499.45 1091.60,499.45 1091.80,499.45 1092.00,499.45 1092.20,499.45 1092.40,499.45 1092.60,499.45 1092.80,499.45 1093.00,499.46 1093.20,499.46 1093.40,499.46 1093.60,499.46 1093.80,499.46 1094.00,499.46 1094.20,499.46 1094.40,499.46 1094.60,499.46 1094.80,499.46 1095.00,499.46 1095.20,499.46 1095.40,499.46 1095.60,499.46 1095.80,499.46 1096.00,499.46 1096.20,499.46 1096.40,499.46 1096.60,499.47 1096.80,499.47 1097.00,499.47 1097.20,499.47 1097.40,499.47 1097.60,499.47 1097.80,499.47 1098.00,499.47 1098.20,499.47 1098.40,499.47 1098.60,499.47 1098.80,499.47 1099.00,499.47 1099.20,499.47 1099.40,499.47 1099.60,499.47 1099.80,499.47 1100.00,499.47 1100.20,499.48 1100.40,499.48 1100.60,499.48 1100.80,499.48 1101.00,499.48 1101.20,499.48 1101.40,499.48 1101.60,499.48 1101.80,499.48 1102.00,499.48 1102.20,499.48 1102.40,499.48 1102.60,499.48 1102.80,499.48 1103.00,499.48 1103.20,499.48 1103.40,499.48 1103.60,499.48 1103.80,499.49 1104.00,499.49 1104.20,499.49 1104.40,499.49 1104.60,499.49 1104.80,499.49 1105.00,499.49 1105.20,499.49 1105.40,499.49 1105.60,499.49 1105.80,499.49 1106.00,499.49 1106.20,499.49 1106.40,499.49 1106.60,499.49 1106.80,499.49 1107.00,499.49 1107.20,499.49 1107.40,499.50 1107.60,499.50 1107.80,499.50 1108.00,499.50 1108.20,499.50 1108.40,499.50 1108.60,499.50 1108.80,499.50 1109.00,499.50 1109.20,499.50 1109.40,499.50 1109.60,499.50 1109.80,499.50 1110.00,499.50 1110.20,499.50 1110.40,499.50 1110.60,499.50 1110.80,499.50 1111.00,499.50 1111.20,499.51 1111.40,499.51 1111.60,499.51 1111.80,499.51 1112.00,499.51 1112.20,499.51 1112.40,499.51 1112.60,499.51 1112.80,499.51 1113.00,499.51 1113.20,499.51 1113.40,499.51 1113.60,499.51 1113.80,499.51 1114.00,499.51 1114.20,499.51 1114.40,499.51 1114.60,499.51 1114.80,499.52 1115.00,499.52 1115.20,499.52 1115.40,499.52 1115.60,499.52 1115.80,499.52 1116.00,499.52 1116.20,499.52 1116.40,499.52 1116.60,499.52 1116.80,499.52 1117.00,499.52 1117.20,499.52 1117.40,499.52 1117.60,499.52 1117.80,499.52 1118.00,499.52 1118.20,499.52 1118.40,499.53 1118.60,499.53 1118.80,499.53 1119.00,499.53 1119.20,499.53 1119.40,499.53 1119.60,499.53 1119.80,499.53 1120.00,499.53 1120.20,499.53 1120.40,499.53 1120.60,499.53 1120.80,499.53 1121.00,499.53 1121.20,499.53 1121.40,499.53 1121.60,499.53 1121.80,499.53 1122.00,499.54 1122.20,499.54 1122.40,499.54 1122.60,499.54 1122.80,499.54 1123.00,499.54 1123.20,499.54 1123.40,499.54 1123.60,499.54 1123.80,499.54 1124.00,499.54 1124.20,499.54 1124.40,499.54 1124.60,499.54 1124.80,499.54 1125.00,499.54 1125.20,499.54 1125.40,499.54 1125.60,499.55 1125.80,499.55 1126.00,499.55 1126.20,499.55 1126.40,499.55 1126.60,499.55 1126.80,499.55 1127.00,499.55 1127.20,499.55 1127.40,499.55 1127.60,499.55 1127.80,499.55 1128.00,499.55 1128.20,499.55 1128.40,499.55 1128.60,499.55 1128.80,499.55 1129.00,499.55 1129.20,499.55 1129.40,499.56 1129.60,499.56 1129.80,499.56 1130.00,499.56 1130.20,499.56 1130.40,499.56 1130.60,499.56 1130.80,499.56 1131.00,499.56 1131.20,499.56 1131.40,499.56 1131.60,499.56 1131.80,499.56 1132.00,499.56 1132.20,499.56 1132.40,499.56 1132.60,499.56 1132.80,499.56 1133.00,499.57 1133.20,499.57 1133.40,499.57 1133.60,499.57 1133.80,499.57 1134.00,499.57 1134.20,499.57 1134.40,499.57 1134.60,499.57 1134.80,499.57 1135.00,499.57 1135.20,499.57 1135.40,499.57 1135.60,499.57 1135.80,499.57 1136.00,499.57 1136.20,499.57 1136.40,499.57 1136.60,499.58 1136.80,499.58 1137.00,499.58 1137.20,499.58 1137.40,499.58 1137.60,499.58 1137.80,499.58 1138.00,499.58 1138.20,499.58 1138.40,499.58 1138.60,499.58 1138.80,499.58 1139.00,499.58 1139.20,499.58 1139.40,499.58 1139.60,499.58 1139.80,499.58 1140.00,499.58 1140.20,499.59 1140.40,499.59 1140.60,499.59 1140.80,499.59 1141.00,499.59 1141.20,499.59 1141.40,499.59 1141.60,499.59 1141.80,499.59 1142.00,499.59 1142.20,499.59 1142.40,499.59 1142.60,499.59 1142.80,499.59 1143.00,499.59 1143.20,499.59 1143.40,499.59 1143.60,499.59 1143.80,499.60 1144.00,499.60 1144.20,499.60 1144.40,499.60 1144.60,499.60 1144.80,499.60 1145.00,499.60 1145.20,499.60 1145.40,499.60 1145.60,499.60 1145.80,499.60 1146.00,499.60 1146.20,499.60 1146.40,499.60 1146.60,499.60 1146.80,499.60 1147.00,499.60 1147.20,499.60 1147.40,499.60 1147.60,499.61 1147.80,499.61 1148.00,499.61 1148.20,499.61 1148.40,499.61 1148.60,499.61 1148.80,499.61 1149.00,499.61 1149.20,499.61 1149.40,499.61 1149.60,499.61 1149.80,499.61 1150.00,499.61 1150.20,499.61 1150.40,499.61 1150.60,499.61 1150.80,499.61 1151.00,499.61 1151.20,499.62 1151.40,499.62 1151.60,499.62 1151.80,499.62 1152.00,499.62 1152.20,499.62 1152.40,499.62 1152.60,499.62 1152.80,499.62 1153.00,499.62 1153.20,499.62 1153.40,499.62 1153.60,499.62 1153.80,499.62 1154.00,499.62 1154.20,499.62 1154.40,499.62 1154.60,499.62 1154.80,499.63 1155.00,499.63 1155.20,499.63 1155.40,499.63 1155.60,499.63 1155.80,499.63 1156.00,499.63 1156.20,499.63 1156.40,499.63 1156.60,499.63 1156.80,499.63 1157.00,499.63 1157.20,499.63 1157.40,499.63 1157.60,499.63 1157.80,499.63 1158.00,499.63 1158.20,499.63 1158.40,499.64 1158.60,499.64 1158.80,499.64 1159.00,499.64 1159.20,499.64 1159.40,499.64 1159.60,499.64 1159.80,499.64 1160.00,499.64 1160.20,499.64 1160.40,499.64 1160.60,499.64 1160.80,499.64 1161.00,499.64 1161.20,499.64 1161.40,499.64 1161.60,499.64 1161.80,499.64 1162.00,499.65 1162.20,499.65 1162.40,499.65 1162.60,499.65 1162.80,499.65 1163.00,499.65 1163.20,499.65 1163.40,499.65 1163.60,499.65 1163.80,499.65 1164.00,499.65 1164.20,499.65 1164.40,499.65 1164.60,499.65 1164.80,499.65 1165.00,499.65 1165.20,499.65 1165.40,499.65 1165.60,499.65 1165.80,499.66 1166.00,499.66 1166.20,499.66 1166.40,499.66 1166.60,499.66 1166.80,499.66 1167.00,499.66 1167.20,499.66 1167.40,499.66 1167.60,499.66 1167.80,499.66 1168.00,499.66 1168.20,499.66 1168.40,499.66 1168.60,499.66 1168.80,499.66 1169.00,499.66 1169.20,499.66 1169.40,499.67 1169.60,499.67 1169.80,499.67 1170.00,499.67 1170.20,499.67 1170.40,499.67 1170.60,499.67 1170.80,499.67 1171.00,499.67 1171.20,499.67 1171.40,499.67 1171.60,499.67 1171.80,499.67 1172.00,499.67 1172.20,499.67 1172.40,499.67 1172.60,499.67 1172.80,499.67 1173.00,499.68 1173.20,499.68 1173.40,499.68 1173.60,499.68 1173.80,499.68 1174.00,499.68 1174.20,499.68 1174.40,499.68 1174.60,499.68 1174.80,499.68 1175.00,499.68 1175.20,499.68 1175.40,499.68 1175.60,499.68 1175.80,499.68 1176.00,499.68 1176.20,499.68 1176.40,499.68 1176.60,499.69 1176.80,499.69 1177.00,499.69 1177.20,499.69 1177.40,499.69 1177.60,499.69 1177.80,499.69 1178.00,499.69 1178.20,499.69 1178.40,499.69 1178.60,499.69 1178.80,499.69 1179.00,499.69 1179.20,499.69 1179.40,499.69 1179.60,499.69 1179.80,499.69 1180.00,499.69 1180.20,499.70 1180.40,499.70 1180.60,499.70 1180.80,499.70 1181.00,499.70 1181.20,499.70 1181.40,499.70 1181.60,499.70 1181.80,499.70" fill="none" stroke="#A02020" stroke-width="1.1" stroke-linejoin="round"/>
<text x="350" y="269.6" font-size="9" fill="#1C1C8A" text-anchor="start" font-weight="normal" font-family='"Liberation Sans", sans-serif' textLength="22" lengthAdjust="spacingAndGlyphs" stroke="#1C1C8A" stroke-width="0.25">1.942</text>
<text x="376" y="313" font-size="9" fill="#1C1C8A" text-anchor="start" font-weight="normal" font-family='"Liberation Sans", sans-serif' textLength="22" lengthAdjust="spacingAndGlyphs" stroke="#1C1C8A" stroke-width="0.25">3.299</text>
<text x="337" y="494.8" font-size="9" fill="#1C1C8A" text-anchor="start" font-weight="normal" font-family='"Liberation Sans", sans-serif' textLength="21" lengthAdjust="spacingAndGlyphs" stroke="#1C1C8A" stroke-width="0.25">1.585</text>
<text x="364" y="492.4" font-size="9" fill="#1C1C8A" text-anchor="start" font-weight="normal" font-family='"Liberation Sans", sans-serif' textLength="21" lengthAdjust="spacingAndGlyphs" stroke="#1C1C8A" stroke-width="0.25">2.408</text>
<text x="389" y="494" font-size="9" fill="#1C1C8A" text-anchor="start" font-weight="normal" font-family='"Liberation Sans", sans-serif' textLength="21" lengthAdjust="spacingAndGlyphs" stroke="#1C1C8A" stroke-width="0.25">3.415</text>
<text x="402" y="468.8" font-size="9" fill="#1C1C8A" text-anchor="start" font-weight="normal" font-family='"Liberation Sans", sans-serif' textLength="21" lengthAdjust="spacingAndGlyphs" stroke="#1C1C8A" stroke-width="0.25">4.677</text>
<text x="424" y="494.8" font-size="9" fill="#1C1C8A" text-anchor="start" font-weight="normal" font-family='"Liberation Sans", sans-serif' textLength="21" lengthAdjust="spacingAndGlyphs" stroke="#1C1C8A" stroke-width="0.25">6.238</text>
<text x="437" y="481.3" font-size="9" fill="#1C1C8A" text-anchor="start" font-weight="normal" font-family='"Liberation Sans", sans-serif' textLength="22" lengthAdjust="spacingAndGlyphs" stroke="#1C1C8A" stroke-width="0.25">6.530</text>
<text x="463" y="491.6" font-size="9" fill="#1C1C8A" text-anchor="start" font-weight="normal" font-family='"Liberation Sans", sans-serif' textLength="21.5" lengthAdjust="spacingAndGlyphs" stroke="#1C1C8A" stroke-width="0.25">8.312</text>
<text x="476" y="473.7" font-size="9" fill="#1C1C8A" text-anchor="start" font-weight="normal" font-family='"Liberation Sans", sans-serif' textLength="21" lengthAdjust="spacingAndGlyphs" stroke="#1C1C8A" stroke-width="0.25">8.568</text>
<text x="493.2" y="489.7" font-size="9" fill="#1C1C8A" text-anchor="start" font-weight="normal" font-family='"Liberation Sans", sans-serif' textLength="21.4" lengthAdjust="spacingAndGlyphs" stroke="#1C1C8A" stroke-width="0.25">9.921</text>
<text x="508.8" y="434.7" font-size="9" fill="#1C1C8A" text-anchor="start" font-weight="normal" font-family='"Liberation Sans", sans-serif' textLength="25" lengthAdjust="spacingAndGlyphs" stroke="#1C1C8A" stroke-width="0.25">10.414</text>
<text x="533.4" y="479.5" font-size="9" fill="#1C1C8A" text-anchor="start" font-weight="normal" font-family='"Liberation Sans", sans-serif' textLength="25.6" lengthAdjust="spacingAndGlyphs" stroke="#1C1C8A" stroke-width="0.25">11.744</text>
<text x="592.7" y="483.9" font-size="9" fill="#1C1C8A" text-anchor="start" font-weight="normal" font-family='"Liberation Sans", sans-serif' textLength="26" lengthAdjust="spacingAndGlyphs" stroke="#1C1C8A" stroke-width="0.25">14.856</text>
<text x="628.7" y="477.6" font-size="9" fill="#1C1C8A" text-anchor="start" font-weight="normal" font-family='"Liberation Sans", sans-serif' textLength="25.5" lengthAdjust="spacingAndGlyphs" stroke="#1C1C8A" stroke-width="0.25">16.744</text>
<text x="651.6" y="490.6" font-size="9" fill="#1C1C8A" text-anchor="start" font-weight="normal" font-family='"Liberation Sans", sans-serif' textLength="25.5" lengthAdjust="spacingAndGlyphs" stroke="#1C1C8A" stroke-width="0.25">17.928</text>
<text x="694.5" y="491" font-size="9" fill="#1C1C8A" text-anchor="start" font-weight="normal" font-family='"Liberation Sans", sans-serif' textLength="26.3" lengthAdjust="spacingAndGlyphs" stroke="#1C1C8A" stroke-width="0.25">20.240</text>
<text x="726.9" y="492.3" font-size="9" fill="#1C1C8A" text-anchor="start" font-weight="normal" font-family='"Liberation Sans", sans-serif' textLength="26" lengthAdjust="spacingAndGlyphs" stroke="#1C1C8A" stroke-width="0.25">21.948</text>
<text x="783" y="491.6" font-size="9" fill="#1C1C8A" text-anchor="start" font-weight="normal" font-family='"Liberation Sans", sans-serif' textLength="26" lengthAdjust="spacingAndGlyphs" stroke="#1C1C8A" stroke-width="0.25">24.924</text>
<line x1="348" y1="497" x2="355" y2="499" stroke="#9090D8" stroke-width="0.8" />
<line x1="367" y1="496.5" x2="372" y2="494.5" stroke="#9090D8" stroke-width="0.8" />
<line x1="392" y1="497" x2="404" y2="495.5" stroke="#9090D8" stroke-width="0.8" />
<line x1="431" y1="496.5" x2="438" y2="498.5" stroke="#9090D8" stroke-width="0.8" />
<line x1="474" y1="494" x2="481" y2="496" stroke="#9090D8" stroke-width="0.8" />
<line x1="504" y1="493" x2="512" y2="494" stroke="#9090D8" stroke-width="0.8" />
<rect x="257.5" y="561.5" width="925" height="322" fill="#FFFFFF" stroke="#E2E2E2" stroke-width="1" />
<text x="257.5" y="573" font-size="11" fill="#000" text-anchor="start" font-weight="normal" font-family='"Liberation Sans", sans-serif' textLength="380" lengthAdjust="spacingAndGlyphs" >C:\MnovaDemo\m...ride) Py_62.cdf Injection 1 Function 1 MS +spectrum 1.94</text>
<rect x="319" y="576" width="863" height="271" fill="#FFFFFF" stroke="#E6E6E6" stroke-width="1.5" />
<line x1="314.5" y1="576" x2="314.5" y2="848.5" stroke="#6A6A6A" stroke-width="1.4" />
<line x1="309.5" y1="825.3" x2="314.5" y2="825.3" stroke="#444" stroke-width="1" />
<text x="308.5" y="829.3" font-size="10" fill="#111" text-anchor="end" font-weight="normal" font-family='"Liberation Sans", sans-serif' textLength="16" lengthAdjust="spacingAndGlyphs" >0.0</text>
<line x1="309.5" y1="802.6099999999999" x2="314.5" y2="802.6099999999999" stroke="#444" stroke-width="1" />
<text x="302.9" y="806.5099999999999" font-size="10" fill="#111" text-anchor="end" font-weight="normal" font-family='"Liberation Sans", sans-serif' textLength="33.2" lengthAdjust="spacingAndGlyphs" >1.0×10</text>
<text x="303.8" y="800.81" font-size="7" fill="#111" text-anchor="start" font-weight="normal" font-family='"Liberation Sans", sans-serif' >8</text>
<line x1="309.5" y1="779.92" x2="314.5" y2="779.92" stroke="#444" stroke-width="1" />
<text x="302.9" y="783.8199999999999" font-size="10" fill="#111" text-anchor="end" font-weight="normal" font-family='"Liberation Sans", sans-serif' textLength="33.2" lengthAdjust="spacingAndGlyphs" >2.0×10</text>
<text x="303.8" y="778.12" font-size="7" fill="#111" text-anchor="start" font-weight="normal" font-family='"Liberation Sans", sans-serif' >8</text>
<line x1="309.5" y1="757.23" x2="314.5" y2="757.23" stroke="#444" stroke-width="1" />
<text x="302.9" y="761.13" font-size="10" fill="#111" text-anchor="end" font-weight="normal" font-family='"Liberation Sans", sans-serif' textLength="33.2" lengthAdjust="spacingAndGlyphs" >3.0×10</text>
<text x="303.8" y="755.4300000000001" font-size="7" fill="#111" text-anchor="start" font-weight="normal" font-family='"Liberation Sans", sans-serif' >8</text>
<line x1="309.5" y1="734.54" x2="314.5" y2="734.54" stroke="#444" stroke-width="1" />
<text x="302.9" y="738.4399999999999" font-size="10" fill="#111" text-anchor="end" font-weight="normal" font-family='"Liberation Sans", sans-serif' textLength="33.2" lengthAdjust="spacingAndGlyphs" >4.0×10</text>
<text x="303.8" y="732.74" font-size="7" fill="#111" text-anchor="start" font-weight="normal" font-family='"Liberation Sans", sans-serif' >8</text>
<line x1="309.5" y1="711.8499999999999" x2="314.5" y2="711.8499999999999" stroke="#444" stroke-width="1" />
<text x="302.9" y="715.7499999999999" font-size="10" fill="#111" text-anchor="end" font-weight="normal" font-family='"Liberation Sans", sans-serif' textLength="33.2" lengthAdjust="spacingAndGlyphs" >5.0×10</text>
<text x="303.8" y="710.05" font-size="7" fill="#111" text-anchor="start" font-weight="normal" font-family='"Liberation Sans", sans-serif' >8</text>
<line x1="309.5" y1="689.16" x2="314.5" y2="689.16" stroke="#444" stroke-width="1" />
<text x="302.9" y="693.06" font-size="10" fill="#111" text-anchor="end" font-weight="normal" font-family='"Liberation Sans", sans-serif' textLength="33.2" lengthAdjust="spacingAndGlyphs" >6.0×10</text>
<text x="303.8" y="687.36" font-size="7" fill="#111" text-anchor="start" font-weight="normal" font-family='"Liberation Sans", sans-serif' >8</text>
<line x1="309.5" y1="666.4699999999999" x2="314.5" y2="666.4699999999999" stroke="#444" stroke-width="1" />
<text x="302.9" y="670.3699999999999" font-size="10" fill="#111" text-anchor="end" font-weight="normal" font-family='"Liberation Sans", sans-serif' textLength="33.2" lengthAdjust="spacingAndGlyphs" >7.0×10</text>
<text x="303.8" y="664.67" font-size="7" fill="#111" text-anchor="start" font-weight="normal" font-family='"Liberation Sans", sans-serif' >8</text>
<line x1="309.5" y1="643.78" x2="314.5" y2="643.78" stroke="#444" stroke-width="1" />
<text x="302.9" y="647.68" font-size="10" fill="#111" text-anchor="end" font-weight="normal" font-family='"Liberation Sans", sans-serif' textLength="33.2" lengthAdjust="spacingAndGlyphs" >8.0×10</text>
<text x="303.8" y="641.98" font-size="7" fill="#111" text-anchor="start" font-weight="normal" font-family='"Liberation Sans", sans-serif' >8</text>
<line x1="309.5" y1="621.0899999999999" x2="314.5" y2="621.0899999999999" stroke="#444" stroke-width="1" />
<text x="302.9" y="624.9899999999999" font-size="10" fill="#111" text-anchor="end" font-weight="normal" font-family='"Liberation Sans", sans-serif' textLength="33.2" lengthAdjust="spacingAndGlyphs" >9.0×10</text>
<text x="303.8" y="619.29" font-size="7" fill="#111" text-anchor="start" font-weight="normal" font-family='"Liberation Sans", sans-serif' >8</text>
<line x1="309.5" y1="598.4" x2="314.5" y2="598.4" stroke="#444" stroke-width="1" />
<text x="302.9" y="602.3" font-size="10" fill="#111" text-anchor="end" font-weight="normal" font-family='"Liberation Sans", sans-serif' textLength="33.2" lengthAdjust="spacingAndGlyphs" >1.0×10</text>
<text x="303.8" y="596.6" font-size="7" fill="#111" text-anchor="start" font-weight="normal" font-family='"Liberation Sans", sans-serif' >9</text>
<line x1="311.5" y1="836.645" x2="314.5" y2="836.645" stroke="#444" stroke-width="1" />
<line x1="311.5" y1="813.9549999999999" x2="314.5" y2="813.9549999999999" stroke="#444" stroke-width="1" />
<line x1="311.5" y1="791.265" x2="314.5" y2="791.265" stroke="#444" stroke-width="1" />
<line x1="311.5" y1="768.5749999999999" x2="314.5" y2="768.5749999999999" stroke="#444" stroke-width="1" />
<line x1="311.5" y1="745.885" x2="314.5" y2="745.885" stroke="#444" stroke-width="1" />
<line x1="311.5" y1="723.1949999999999" x2="314.5" y2="723.1949999999999" stroke="#444" stroke-width="1" />
<line x1="311.5" y1="700.505" x2="314.5" y2="700.505" stroke="#444" stroke-width="1" />
<line x1="311.5" y1="677.8149999999999" x2="314.5" y2="677.8149999999999" stroke="#444" stroke-width="1" />
<line x1="311.5" y1="655.125" x2="314.5" y2="655.125" stroke="#444" stroke-width="1" />
<line x1="311.5" y1="632.435" x2="314.5" y2="632.435" stroke="#444" stroke-width="1" />
<line x1="311.5" y1="609.7449999999999" x2="314.5" y2="609.7449999999999" stroke="#444" stroke-width="1" />
<line x1="305" y1="848" x2="314.5" y2="848" stroke="#444" stroke-width="1.2" />
<line x1="319" y1="825.5" x2="1182" y2="825.5" stroke="#C8C8C8" stroke-width="1" />
<line x1="320" y1="852.5" x2="1182" y2="852.5" stroke="#444" stroke-width="1" />
<line x1="335.2" y1="852.5" x2="335.2" y2="857" stroke="#444" stroke-width="1" />
<text x="335.2" y="869" font-size="10" fill="#111" text-anchor="middle" font-weight="normal" font-family='"Liberation Sans", sans-serif' >40</text>
<line x1="365.166" y1="852.5" x2="365.166" y2="857" stroke="#444" stroke-width="1" />
<text x="365.166" y="869" font-size="10" fill="#111" text-anchor="middle" font-weight="normal" font-family='"Liberation Sans", sans-serif' >60</text>
<line x1="395.132" y1="852.5" x2="395.132" y2="857" stroke="#444" stroke-width="1" />
<text x="395.132" y="869" font-size="10" fill="#111" text-anchor="middle" font-weight="normal" font-family='"Liberation Sans", sans-serif' >80</text>
<line x1="425.09799999999996" y1="852.5" x2="425.09799999999996" y2="857" stroke="#444" stroke-width="1" />
<text x="425.09799999999996" y="869" font-size="10" fill="#111" text-anchor="middle" font-weight="normal" font-family='"Liberation Sans", sans-serif' >100</text>
<line x1="455.06399999999996" y1="852.5" x2="455.06399999999996" y2="857" stroke="#444" stroke-width="1" />
<text x="455.06399999999996" y="869" font-size="10" fill="#111" text-anchor="middle" font-weight="normal" font-family='"Liberation Sans", sans-serif' >120</text>
<line x1="485.03" y1="852.5" x2="485.03" y2="857" stroke="#444" stroke-width="1" />
<text x="485.03" y="869" font-size="10" fill="#111" text-anchor="middle" font-weight="normal" font-family='"Liberation Sans", sans-serif' >140</text>
<line x1="514.996" y1="852.5" x2="514.996" y2="857" stroke="#444" stroke-width="1" />
<text x="514.996" y="869" font-size="10" fill="#111" text-anchor="middle" font-weight="normal" font-family='"Liberation Sans", sans-serif' >160</text>
<line x1="544.962" y1="852.5" x2="544.962" y2="857" stroke="#444" stroke-width="1" />
<text x="544.962" y="869" font-size="10" fill="#111" text-anchor="middle" font-weight="normal" font-family='"Liberation Sans", sans-serif' >180</text>
<line x1="574.928" y1="852.5" x2="574.928" y2="857" stroke="#444" stroke-width="1" />
<text x="574.928" y="869" font-size="10" fill="#111" text-anchor="middle" font-weight="normal" font-family='"Liberation Sans", sans-serif' >200</text>
<line x1="604.894" y1="852.5" x2="604.894" y2="857" stroke="#444" stroke-width="1" />
<text x="604.894" y="869" font-size="10" fill="#111" text-anchor="middle" font-weight="normal" font-family='"Liberation Sans", sans-serif' >220</text>
<line x1="634.8599999999999" y1="852.5" x2="634.8599999999999" y2="857" stroke="#444" stroke-width="1" />
<text x="634.8599999999999" y="869" font-size="10" fill="#111" text-anchor="middle" font-weight="normal" font-family='"Liberation Sans", sans-serif' >240</text>
<line x1="664.826" y1="852.5" x2="664.826" y2="857" stroke="#444" stroke-width="1" />
<text x="664.826" y="869" font-size="10" fill="#111" text-anchor="middle" font-weight="normal" font-family='"Liberation Sans", sans-serif' >260</text>
<line x1="694.7919999999999" y1="852.5" x2="694.7919999999999" y2="857" stroke="#444" stroke-width="1" />
<text x="694.7919999999999" y="869" font-size="10" fill="#111" text-anchor="middle" font-weight="normal" font-family='"Liberation Sans", sans-serif' >280</text>
<line x1="724.758" y1="852.5" x2="724.758" y2="857" stroke="#444" stroke-width="1" />
<text x="724.758" y="869" font-size="10" fill="#111" text-anchor="middle" font-weight="normal" font-family='"Liberation Sans", sans-serif' >300</text>
<line x1="754.7239999999999" y1="852.5" x2="754.7239999999999" y2="857" stroke="#444" stroke-width="1" />
<text x="754.7239999999999" y="869" font-size="10" fill="#111" text-anchor="middle" font-weight="normal" font-family='"Liberation Sans", sans-serif' >320</text>
<line x1="784.69" y1="852.5" x2="784.69" y2="857" stroke="#444" stroke-width="1" />
<text x="784.69" y="869" font-size="10" fill="#111" text-anchor="middle" font-weight="normal" font-family='"Liberation Sans", sans-serif' >340</text>
<line x1="814.656" y1="852.5" x2="814.656" y2="857" stroke="#444" stroke-width="1" />
<text x="814.656" y="869" font-size="10" fill="#111" text-anchor="middle" font-weight="normal" font-family='"Liberation Sans", sans-serif' >360</text>
<line x1="844.622" y1="852.5" x2="844.622" y2="857" stroke="#444" stroke-width="1" />
<text x="844.622" y="869" font-size="10" fill="#111" text-anchor="middle" font-weight="normal" font-family='"Liberation Sans", sans-serif' >380</text>
<line x1="874.588" y1="852.5" x2="874.588" y2="857" stroke="#444" stroke-width="1" />
<text x="874.588" y="869" font-size="10" fill="#111" text-anchor="middle" font-weight="normal" font-family='"Liberation Sans", sans-serif' >400</text>
<line x1="904.5540000000001" y1="852.5" x2="904.5540000000001" y2="857" stroke="#444" stroke-width="1" />
<text x="904.5540000000001" y="869" font-size="10" fill="#111" text-anchor="middle" font-weight="normal" font-family='"Liberation Sans", sans-serif' >420</text>
<line x1="934.52" y1="852.5" x2="934.52" y2="857" stroke="#444" stroke-width="1" />
<text x="934.52" y="869" font-size="10" fill="#111" text-anchor="middle" font-weight="normal" font-family='"Liberation Sans", sans-serif' >440</text>
<line x1="964.4859999999999" y1="852.5" x2="964.4859999999999" y2="857" stroke="#444" stroke-width="1" />
<text x="964.4859999999999" y="869" font-size="10" fill="#111" text-anchor="middle" font-weight="normal" font-family='"Liberation Sans", sans-serif' >460</text>
<line x1="994.452" y1="852.5" x2="994.452" y2="857" stroke="#444" stroke-width="1" />
<text x="994.452" y="869" font-size="10" fill="#111" text-anchor="middle" font-weight="normal" font-family='"Liberation Sans", sans-serif' >480</text>
<line x1="1024.418" y1="852.5" x2="1024.418" y2="857" stroke="#444" stroke-width="1" />
<text x="1024.418" y="869" font-size="10" fill="#111" text-anchor="middle" font-weight="normal" font-family='"Liberation Sans", sans-serif' >500</text>
<line x1="1054.384" y1="852.5" x2="1054.384" y2="857" stroke="#444" stroke-width="1" />
<text x="1054.384" y="869" font-size="10" fill="#111" text-anchor="middle" font-weight="normal" font-family='"Liberation Sans", sans-serif' >520</text>
<line x1="1084.35" y1="852.5" x2="1084.35" y2="857" stroke="#444" stroke-width="1" />
<text x="1084.35" y="869" font-size="10" fill="#111" text-anchor="middle" font-weight="normal" font-family='"Liberation Sans", sans-serif' >540</text>
<line x1="1114.316" y1="852.5" x2="1114.316" y2="857" stroke="#444" stroke-width="1" />
<text x="1114.316" y="869" font-size="10" fill="#111" text-anchor="middle" font-weight="normal" font-family='"Liberation Sans", sans-serif' >560</text>
<line x1="1144.282" y1="852.5" x2="1144.282" y2="857" stroke="#444" stroke-width="1" />
<text x="1144.282" y="869" font-size="10" fill="#111" text-anchor="middle" font-weight="normal" font-family='"Liberation Sans", sans-serif' >580</text>
<line x1="1174.248" y1="852.5" x2="1174.248" y2="857" stroke="#444" stroke-width="1" />
<text x="1174.248" y="869" font-size="10" fill="#111" text-anchor="middle" font-weight="normal" font-family='"Liberation Sans", sans-serif' >600</text>
<line x1="320.217" y1="852.5" x2="320.217" y2="855" stroke="#444" stroke-width="1" />
<line x1="350.183" y1="852.5" x2="350.183" y2="855" stroke="#444" stroke-width="1" />
<line x1="380.149" y1="852.5" x2="380.149" y2="855" stroke="#444" stroke-width="1" />
<line x1="410.115" y1="852.5" x2="410.115" y2="855" stroke="#444" stroke-width="1" />
<line x1="440.081" y1="852.5" x2="440.081" y2="855" stroke="#444" stroke-width="1" />
<line x1="470.047" y1="852.5" x2="470.047" y2="855" stroke="#444" stroke-width="1" />
<line x1="500.013" y1="852.5" x2="500.013" y2="855" stroke="#444" stroke-width="1" />
<line x1="529.979" y1="852.5" x2="529.979" y2="855" stroke="#444" stroke-width="1" />
<line x1="559.9449999999999" y1="852.5" x2="559.9449999999999" y2="855" stroke="#444" stroke-width="1" />
<line x1="589.911" y1="852.5" x2="589.911" y2="855" stroke="#444" stroke-width="1" />
<line x1="619.877" y1="852.5" x2="619.877" y2="855" stroke="#444" stroke-width="1" />
<line x1="649.843" y1="852.5" x2="649.843" y2="855" stroke="#444" stroke-width="1" />
<line x1="679.809" y1="852.5" x2="679.809" y2="855" stroke="#444" stroke-width="1" />
<line x1="709.775" y1="852.5" x2="709.775" y2="855" stroke="#444" stroke-width="1" />
<line x1="739.741" y1="852.5" x2="739.741" y2="855" stroke="#444" stroke-width="1" />
<line x1="769.707" y1="852.5" x2="769.707" y2="855" stroke="#444" stroke-width="1" />
<line x1="799.673" y1="852.5" x2="799.673" y2="855" stroke="#444" stroke-width="1" />
<line x1="829.6389999999999" y1="852.5" x2="829.6389999999999" y2="855" stroke="#444" stroke-width="1" />
<line x1="859.605" y1="852.5" x2="859.605" y2="855" stroke="#444" stroke-width="1" />
<line x1="889.5709999999999" y1="852.5" x2="889.5709999999999" y2="855" stroke="#444" stroke-width="1" />
<line x1="919.537" y1="852.5" x2="919.537" y2="855" stroke="#444" stroke-width="1" />
<line x1="949.5029999999999" y1="852.5" x2="949.5029999999999" y2="855" stroke="#444" stroke-width="1" />
<line x1="979.469" y1="852.5" x2="979.469" y2="855" stroke="#444" stroke-width="1" />
<line x1="1009.435" y1="852.5" x2="1009.435" y2="855" stroke="#444" stroke-width="1" />
<line x1="1039.401" y1="852.5" x2="1039.401" y2="855" stroke="#444" stroke-width="1" />
<line x1="1069.367" y1="852.5" x2="1069.367" y2="855" stroke="#444" stroke-width="1" />
<line x1="1099.333" y1="852.5" x2="1099.333" y2="855" stroke="#444" stroke-width="1" />
<line x1="1129.299" y1="852.5" x2="1129.299" y2="855" stroke="#444" stroke-width="1" />
<line x1="1159.2649999999999" y1="852.5" x2="1159.2649999999999" y2="855" stroke="#444" stroke-width="1" />
<text x="728" y="882" font-size="10" fill="#111" text-anchor="start" font-weight="normal" font-family='"Liberation Sans", sans-serif' textLength="43" lengthAdjust="spacingAndGlyphs" >m/z (Da)</text>
<rect x="326.96171269999996" y="798.3215899999999" width="2" height="26.978410000000054" fill="#8B0E0E" />
<rect x="328.4463119" y="598.4" width="1.5" height="226.89999999999998" fill="#8B0E0E" />
<rect x="329.00577999999996" y="803.5175999999999" width="2.2" height="21.782400000000052" fill="#8B0E0E" />
<rect x="331.5058405" y="740.16712" width="1.5" height="85.13288" fill="#8B0E0E" />
<rect x="405.3667225551279" y="824.3" width="2" height="1" fill="#D08080" />
<rect x="372.9796075502482" y="824.3" width="2" height="1" fill="#D08080" />
<rect x="476.4668571755205" y="824.3" width="2" height="1" fill="#D08080" />
<rect x="353.4362598496014" y="824.3" width="1" height="1" fill="#D08080" />
<rect x="607.3999044085322" y="824.3" width="1.5" height="1" fill="#D08080" />
<rect x="411.8083140531984" y="824.3" width="1" height="1" fill="#D08080" />
<rect x="391.4470283942476" y="824.3" width="2" height="1" fill="#D08080" />
<rect x="475.3254584774976" y="824.3" width="2" height="1" fill="#D08080" />
<rect x="477.1594225314369" y="824.3" width="2" height="1" fill="#D08080" />
<rect x="593.0056544357858" y="824.3" width="1" height="1" fill="#D08080" />
<rect x="524.8952565860483" y="824.3" width="2" height="1" fill="#D08080" />
<rect x="451.13437996996754" y="824.3" width="1" height="1" fill="#D08080" />
<rect x="535.9028385227983" y="824.3" width="1" height="1" fill="#D08080" />
<rect x="381.706314878911" y="824.3" width="2" height="1" fill="#D08080" />
<rect x="346.58797133452185" y="824.3" width="1" height="1" fill="#D08080" />
<rect x="581.7267950931408" y="824.3" width="1.5" height="1" fill="#D08080" />
<rect x="476.0740118690412" y="824.3" width="2" height="1" fill="#D08080" />
<rect x="610.8145032743988" y="824.3" width="1.5" height="1" fill="#D08080" />
<rect x="548.7677212642276" y="824.3" width="1.5" height="1" fill="#D08080" />
<rect x="452.6482073110772" y="824.3" width="2" height="1" fill="#D08080" />
<rect x="467.6030213844518" y="824.3" width="1" height="1" fill="#D08080" />
<rect x="598.3796893540821" y="824.3" width="1" height="1" fill="#D08080" />
<rect x="344.5092569138732" y="824.3" width="1.5" height="1" fill="#D08080" />
<rect x="399.04911834397154" y="824.3" width="2" height="1" fill="#D08080" />
<rect x="465.0554662783433" y="824.3" width="2" height="1" fill="#D08080" />
<rect x="591.2599818475271" y="824.3" width="1.5" height="1" fill="#D08080" />
<rect x="486.46213469688706" y="824.3" width="1.5" height="1" fill="#D08080" />
<rect x="506.57341112115455" y="824.3" width="2" height="1" fill="#D08080" />
<rect x="509.90162356021665" y="824.3" width="2" height="1" fill="#D08080" />
<rect x="403.6868162291695" y="824.3" width="1.5" height="1" fill="#D08080" />
<text x="323.2" y="583.7" font-size="9" fill="#1C1C8A" text-anchor="start" font-weight="normal" font-family='"Liberation Sans", sans-serif' textLength="26" lengthAdjust="spacingAndGlyphs" stroke="#1C1C8A" stroke-width="0.25">35.993</text>
<text x="318.7" y="595" font-size="9" fill="#1C1C8A" text-anchor="start" font-weight="normal" font-family='"Liberation Sans", sans-serif' textLength="34.3" lengthAdjust="spacingAndGlyphs" stroke="#1C1C8A" stroke-width="0.25">100.00%</text>
<text x="331.8" y="724" font-size="9" fill="#1C1C8A" text-anchor="start" font-weight="normal" font-family='"Liberation Sans", sans-serif' textLength="26.2" lengthAdjust="spacingAndGlyphs" stroke="#1C1C8A" stroke-width="0.25">38.035</text>
<text x="330" y="735" font-size="9" fill="#1C1C8A" text-anchor="start" font-weight="normal" font-family='"Liberation Sans", sans-serif' textLength="30.5" lengthAdjust="spacingAndGlyphs" stroke="#1C1C8A" stroke-width="0.25">37.52%</text>
<text x="335" y="782.5" font-size="9" fill="#1C1C8A" text-anchor="start" font-weight="normal" font-family='"Liberation Sans", sans-serif' textLength="27" lengthAdjust="spacingAndGlyphs" stroke="#1C1C8A" stroke-width="0.25">35.169</text>
<text x="333.4" y="792.3" font-size="9" fill="#1C1C8A" text-anchor="start" font-weight="normal" font-family='"Liberation Sans", sans-serif' textLength="31" lengthAdjust="spacingAndGlyphs" stroke="#1C1C8A" stroke-width="0.25">11.89%</text>
<line x1="333" y1="739.5" x2="346" y2="737.5" stroke="#7070D0" stroke-width="0.8" />
<line x1="328" y1="797.5" x2="349" y2="795.5" stroke="#7070D0" stroke-width="0.8" />
</g>
<rect x="257" y="238" width="925" height="322" fill="none" stroke="#3388FF" stroke-width="2" />
<clipPath id="thc"><rect x="27" y="251" width="108" height="76"/></clipPath>
<g clip-path="url(#thc)"><use href="#pg" transform="translate(27 251) scale(0.1149 0.115) translate(-250 -230)"/></g>
<rect x="26.5" y="250.5" width="109" height="77" fill="none" stroke="#5E6E84" stroke-width="1.2" />
<rect x="25.5" y="92.5" width="17" height="3" fill="#0B3A87" />
<rect x="49" y="92.5" width="17" height="3" fill="#0B3A87" />
<rect x="44.5" y="74" width="3" height="17" fill="#0B3A87" />
<rect x="44.5" y="97" width="3" height="17" fill="#0B3A87" />
<path d="M88 84 L101.5 76.5 Q102.5 76 102.5 77.5 L102.5 90.5 Q102.5 92 101.5 91.5 Z" fill="#A6A6A6" />
<path d="M129.5 84 L116 76.5 Q115 76 115 77.5 L115 90.5 Q115 92 116 91.5 Z" fill="#A6A6A6" />
<path d="M93 101.5 L96 105.5 L94.3 105.5 L94.3 108 L91.7 108 L91.7 105.5 L90 105.5 Z" fill="#8C1010" />
<path d="M88.5 116 L88.5 110 Q88.5 107.5 91 107.5 L95 107.5 Q97.5 107.5 97.5 110 L97.5 116 L95.5 116 L95.5 111.5 Q95.5 110 93 110 Q90.5 110 90.5 111.5 L90.5 116 Z" fill="#8C1010" />
<rect x="86" y="117" width="14" height="1.6" fill="#F04040" />
<rect x="86" y="115.5" width="1.4" height="4" fill="#F04040" />
<rect x="98.6" y="115.5" width="1.4" height="4" fill="#F04040" />
<rect x="98" y="104.2" width="7" height="2" fill="#0E3E8E" />
<rect x="100.5" y="101.5" width="2" height="7" fill="#0E3E8E" />
<rect x="98" y="109.5" width="7" height="2" fill="#0E3E8E" />
<rect x="113.5" y="102.5" width="17" height="17" fill="#FFFFFF" stroke="#666666" stroke-width="1.3" rx="1"/>
<path d="M129.8 103.2 L129.8 111.9 L124.16 111.9 Z" fill="#E2E2E2" />
<line x1="114" y1="111.0" x2="130" y2="111.0" stroke="#666666" stroke-width="1.3" />
<path d="M115.5 106 Q117 103 118.5 106 Q120 109.5 122 108.5 L124 108.5 Q125 106.5 126 108.5 L129 108.5" fill="none" stroke="#C00E14" stroke-width="1.5" />
<rect x="115.5" y="113" width="1.3" height="4" fill="#C00E14" />
<rect x="118" y="114" width="1.3" height="3" fill="#C00E14" />
<circle cx="126" cy="115" r="5.2" fill="#0E3E8E"/>
<text x="123.2" y="118.2" font-size="8" fill="#FFFFFF" text-anchor="start" font-weight="bold" font-family='"Liberation Sans", sans-serif' textLength="5.6" lengthAdjust="spacingAndGlyphs" >&amp;</text>
<rect x="86.5" y="129.5" width="17" height="17" fill="#FFFFFF" stroke="#666666" stroke-width="1.3" rx="1"/>
<path d="M102.8 130.2 L102.8 138.9 L97.16 138.9 Z" fill="#E2E2E2" />
<line x1="87" y1="138.0" x2="103" y2="138.0" stroke="#666666" stroke-width="1.3" />
<path d="M88.5 134.5 L90 134.5 Q91 131 92 134.5 L94.5 134.5 Q95.5 132 96.5 134.5 L100.5 134.5" fill="none" stroke="#C00E14" stroke-width="1.4" />
<rect x="89" y="140" width="1.3" height="4" fill="#C00E14" />
<rect x="92" y="141" width="1.3" height="3" fill="#C00E14" />
<rect x="94.7" y="140.5" width="9.2" height="3.4" fill="#0E3E8E" />
<rect x="97.6" y="137.4" width="3.4" height="9.5" fill="#0E3E8E" />
<rect x="113.5" y="130.5" width="17" height="16" fill="#FFFFFF" stroke="#666666" stroke-width="1.3" rx="1"/>
<path d="M129.8 131.2 L129.8 139.35 L124.16 139.35 Z" fill="#E2E2E2" />
<rect x="116" y="134" width="1.3" height="3" fill="#C00E14" />
<rect x="116" y="140" width="1.3" height="3" fill="#C00E14" />
<rect x="125" y="140" width="1.3" height="3" fill="#C00E14" />
<rect x="127.5" y="140" width="1.3" height="3" fill="#C00E14" />
<path d="M119 137 L120.5 132.5 L121 137 Z" fill="#E8B020" />
<rect x="112" y="137.2" width="20" height="2" fill="#4A6FA8" />
<rect x="121" y="128" width="2" height="20" fill="#4A6FA8" />
<rect x="148" y="89" width="13" height="2.5" fill="#0B3A87" />
<rect x="167" y="89" width="13" height="2.5" fill="#0B3A87" />
<rect x="163" y="74" width="2.5" height="12" fill="#0B3A87" />
<rect x="163" y="94" width="2.5" height="12" fill="#0B3A87" />
<circle cx="178" cy="104" r="10" fill="#5BB01F"/>
<path d="M175 98.5 L182.5 104 L175 109.5 Z" fill="#FFFFFF" />
<rect x="212" y="87" width="10" height="2.5" fill="#0B3A87" />
<rect x="229" y="87" width="11" height="2.5" fill="#0B3A87" />
<rect x="224.5" y="74" width="2.5" height="10" fill="#0B3A87" />
<rect x="224.5" y="92" width="2.5" height="10" fill="#0B3A87" />
<rect x="229.5" y="92.5" width="22" height="18" fill="#F0F0F0" stroke="#555555" stroke-width="1.2" rx="1"/>
<rect x="229.5" y="91.5" width="22" height="2.5" fill="#1A5FCC" />
<rect x="231.5" y="98" width="3" height="2" fill="#9A9A9A" />
<rect x="231.5" y="105" width="3" height="2" fill="#9A9A9A" />
<rect x="236" y="96.5" width="13" height="4" fill="#FFFFFF" stroke="#B0B0B0" stroke-width="0.8" />
<rect x="236" y="103.5" width="13" height="4" fill="#FFFFFF" stroke="#B0B0B0" stroke-width="0.8" />
<rect x="236.5" y="97" width="2" height="3" fill="#C8C8C8" />
<rect x="236.5" y="104" width="2" height="3" fill="#C8C8C8" />
<rect x="298.5" y="76.5" width="35" height="34" fill="#FFFFFF" stroke="#666666" stroke-width="1.8" rx="1"/>
<path d="M332.8 77.2 L332.8 95.25 L320.32 95.25 Z" fill="#E2E2E2" />
<line x1="299" y1="93.5" x2="333" y2="93.5" stroke="#666666" stroke-width="1.8" />
<rect x="303.5" y="85.5" width="2.8" height="5" fill="#C00E14" />
<rect x="307.5" y="88.0" width="2.8" height="2.5" fill="#C00E14" />
<rect x="312" y="81.5" width="2.8" height="9" fill="#C00E14" />
<rect x="317" y="84.5" width="2.8" height="6" fill="#C00E14" />
<rect x="322.5" y="86.0" width="2.8" height="4.5" fill="#C00E14" />
<rect x="303.5" y="98.5" width="2.8" height="8" fill="#C00E14" />
<rect x="308" y="102" width="2.8" height="4.5" fill="#C00E14" />
<circle cx="325" cy="102.5" r="10" fill="#1A5EC4"/>
<circle cx="323.5" cy="101" r="3.6" fill="none" stroke="#FFFFFF" stroke-width="2"/>
<line x1="326" y1="103.5" x2="329.5" y2="107" stroke="#FFFFFF" stroke-width="2.4" stroke-linecap="round"/>
<rect x="404.5" y="76.5" width="35" height="34" fill="#FFFFFF" stroke="#666666" stroke-width="1.8" rx="1"/>
<path d="M438.8 77.2 L438.8 95.25 L426.32 95.25 Z" fill="#E2E2E2" />
<line x1="405" y1="93.5" x2="439" y2="93.5" stroke="#666666" stroke-width="1.8" />
<rect x="414.5" y="78" width="12" height="16" fill="#F4A0A8" />
<rect x="408.5" y="82.5" width="2.8" height="8" fill="#C00E14" />
<rect x="413" y="85.5" width="2.8" height="5" fill="#C00E14" />
<rect x="418" y="86.5" width="2.8" height="4" fill="#C00E14" />
<rect x="422.5" y="88.0" width="2.8" height="2.5" fill="#C00E14" />
<rect x="428" y="88.5" width="2.8" height="2" fill="#C00E14" />
<path d="M408 106 L412 106 L414 99 L416 106 L420 106" fill="none" stroke="#C00E14" stroke-width="1.8" />
<circle cx="430.5" cy="102.5" r="10" fill="#0E3A80"/>
<rect x="424.5" y="100.5" width="12" height="4" fill="#FFFFFF" />
<rect x="428.5" y="96.5" width="4" height="12" fill="#FFFFFF" />
<rect x="505" y="77" width="34" height="34" fill="#FFFFFF" stroke="#103C8C" stroke-width="2.2" rx="3"/>
<rect x="505" y="77" width="34" height="4.5" fill="#103C8C" stroke="none" stroke-width="0" rx="2"/>
<rect x="533.5" y="78.2" width="3" height="2.4" fill="#E06060" />
<path d="M537 82.5 L537 108 L512 108 Z" fill="#E8E8E8" />
<rect x="508.5" y="84.5" width="5" height="5" fill="#FFFFFF" stroke="#6A6A6A" stroke-width="1" />
<rect x="513.5" y="94.5" width="5" height="5" fill="#FFFFFF" stroke="#6A6A6A" stroke-width="1" />
<rect x="513.5" y="101.5" width="5" height="5" fill="#FFFFFF" stroke="#6A6A6A" stroke-width="1" />
<path d="M511 89.5 L511 104 L513.5 104 M511 97 L513.5 97" fill="none" stroke="#6A6A6A" stroke-width="1" />
<rect x="522.5" y="93" width="1.4" height="5" fill="#C00E14" />
<rect x="525.5" y="89" width="1.4" height="8" fill="#C00E14" />
<rect x="528.5" y="91" width="1.4" height="7" fill="#C00E14" />
<rect x="531.5" y="94" width="1.4" height="4" fill="#C00E14" />
<path d="M521 106 L524 106 L526 99 L528 106 L530 106 L531.5 103 L533 106 L536 106" fill="none" stroke="#C00E14" stroke-width="1.2" />
<rect x="564" y="80" width="17.5" height="12.5" fill="#C8981A" />
<path d="M570 76 L576 76 L576 82 L579.5 82 L573 90.5 L566.5 82 L570 82 Z" fill="#D01818" />
<rect x="612.5" y="76.5" width="35" height="34" fill="#FFFFFF" stroke="#666666" stroke-width="1.8" rx="1"/>
<path d="M646.8 77.2 L646.8 95.25 L634.32 95.25 Z" fill="#E2E2E2" />
<line x1="613" y1="93.5" x2="647" y2="93.5" stroke="#666666" stroke-width="1.8" />
<path d="M616 88.5 L619 88.5 Q620 82 622 82 Q624 82 625 88.5 L629 88.5 Q630 82 632 82 Q634 82 635 88.5 L644 88.5" fill="none" stroke="#C00E14" stroke-width="2.4" />
<path d="M616 106.5 L620 106.5 Q621 102 622.5 102 Q624 102 625 106.5 L630 106.5 Q631 97.5 633 97.5 Q635 97.5 636 106.5 L644 106.5" fill="none" stroke="#C00E14" stroke-width="2.4" />
<rect x="613" y="84.5" width="34" height="2.2" fill="#2A7FE8" />
<rect x="613" y="102.8" width="34" height="2" fill="#8CC0F0" />
<rect x="626.5" y="77" width="2.2" height="17" fill="#2A7FE8" />
<rect x="626.5" y="95" width="2.2" height="15" fill="#8CC0F0" />
<rect x="624.5" y="84" width="6" height="3" fill="#1A3A80" />
<rect x="691.5" y="76.5" width="35" height="34" fill="#FFFFFF" stroke="#666666" stroke-width="1.8" rx="1"/>
<path d="M725.8 77.2 L725.8 95.25 L713.32 95.25 Z" fill="#E2E2E2" />
<line x1="692" y1="93.5" x2="726" y2="93.5" stroke="#666666" stroke-width="1.8" />
<path d="M702 89.5 L705 89.5 Q706 82 708 82 Q710 82 711 89.5 L713 89.5 Q714 84 716 84 Q718 84 719 89.5 L723 89.5" fill="none" stroke="#C00E14" stroke-width="2.4" />
<path d="M695 106 L700 106 Q701 98 703 98 Q705 98 706 106 L712 106" fill="none" stroke="#C00E14" stroke-width="2.4" />
<circle cx="719" cy="104.5" r="7.5" fill="#FFFFFF" stroke="#8A8A8A" stroke-width="1.3"/>
<rect x="716.5" y="95" width="5" height="2" fill="#8A8A8A" />
<rect x="718.2" y="100" width="1.8" height="5" fill="#C00E14" />
<circle cx="761" cy="84.7" r="6.3" fill="#FFFFFF" stroke="#9A9A9A" stroke-width="1.2"/>
<path d="M761 80.5 L761 85 L765 85" fill="none" stroke="#2A7FE8" stroke-width="1.6" />
<rect x="759.5" y="76.5" width="3" height="1.5" fill="#9A9A9A" />
<rect x="748.5" y="80.5" width="4" height="1.5" fill="#2A7FE8" />
<rect x="748.5" y="83.5" width="4" height="1.5" fill="#2A7FE8" />
<rect x="748.5" y="86.5" width="4" height="1.5" fill="#2A7FE8" />
<rect x="749.8" y="103.5" width="18.4" height="14.6" fill="#FFFFFF" stroke="#777777" stroke-width="1.2" />
<path d="M751.5 116 L754 116 L755 108 L756.5 116 L757.5 111 L759 116 L760 112 L761.5 116 L766 116" fill="none" stroke="#C00E14" stroke-width="1.1" />
<path d="M762 104.5 L767 104.5 L767 110 Z" fill="#E2E2E2" />
<rect x="793.5" y="76.5" width="35" height="34" fill="#FFFFFF" stroke="#666666" stroke-width="1.8" rx="1"/>
<path d="M827.8 77.2 L827.8 95.25 L815.32 95.25 Z" fill="#E2E2E2" />
<line x1="794" y1="93.5" x2="828" y2="93.5" stroke="#666666" stroke-width="1.8" />
<path d="M797.5 89 L802 89 Q803 82 805 82 Q807 82 808 89 L810 89 Q811 84 813 84 Q815 84 816 89 L824 89" fill="none" stroke="#C00E14" stroke-width="2.4" />
<rect x="797.5" y="98" width="2.6" height="9" fill="#C00E14" />
<rect x="801.5" y="101" width="2.4" height="6" fill="#C00E14" />
<path d="M806.5 102 Q818.5 90 830.5 102 Q818.5 114 806.5 102 Z" fill="#FFFFFF" stroke="#111111" stroke-width="1.8" />
<circle cx="818.5" cy="101.5" r="4.3" fill="#3A8A2A"/><circle cx="818.5" cy="101.5" r="2.4" fill="#111"/><circle cx="817.3" cy="100.3" r="0.9" fill="#FFF"/>
<rect x="847.5" y="75.5" width="17" height="17" fill="#FFFFFF" stroke="#666666" stroke-width="1.1" rx="1"/>
<path d="M863.8 76.2 L863.8 84.9 L858.16 84.9 Z" fill="#E2E2E2" />
<line x1="848" y1="84.0" x2="864" y2="84.0" stroke="#666666" stroke-width="1.1" />
<path d="M849 81 L851 81 Q852 77 853 81 L854.5 81 Q855.5 78 856.5 81 L862 81" fill="none" stroke="#C00E14" stroke-width="1.4" />
<rect x="849.5" y="86" width="1.2" height="3.5" fill="#C00E14" />
<rect x="852" y="87" width="1.2" height="2.5" fill="#C00E14" />
<path d="M855 86 L859.5 86 L859.5 83.5 L865 88 L859.5 92.5 L859.5 90 L855 90 Z" fill="#1A5FCC" />
<rect x="847.5" y="102.5" width="17" height="17" fill="#FFFFFF" stroke="#666666" stroke-width="1.1" rx="1"/>
<path d="M863.8 103.2 L863.8 111.9 L858.16 111.9 Z" fill="#E2E2E2" />
<line x1="848" y1="111.0" x2="864" y2="111.0" stroke="#666666" stroke-width="1.1" />
<path d="M849 108 L851 108 Q852 104 853 108 L854.5 108 Q855.5 105 856.5 108 L862 108" fill="none" stroke="#C00E14" stroke-width="1.4" />
<rect x="849.5" y="113" width="1.2" height="3.5" fill="#C00E14" />
<rect x="852" y="114" width="1.2" height="2.5" fill="#C00E14" />
<path d="M855 113 L859.5 113 L859.5 110.5 L865 115 L859.5 119.5 L859.5 117 L855 117 Z" fill="#1A5FCC" />
<rect x="847" y="102" width="6" height="10" fill="#F3F3F3" />
<rect x="847.5" y="106.5" width="5.5" height="5" fill="#555555" />
<path d="M848.7 106.5 L848.7 104.5 Q850.25 102.5 851.8 104.5 L851.8 106.5" fill="none" stroke="#555555" stroke-width="1.1" />
<rect x="847.5" y="129.5" width="17" height="17" fill="#FFFFFF" stroke="#666666" stroke-width="1.1" rx="1"/>
<path d="M863.8 130.2 L863.8 138.9 L858.16 138.9 Z" fill="#E2E2E2" />
<line x1="848" y1="138.0" x2="864" y2="138.0" stroke="#666666" stroke-width="1.1" />
<path d="M849 135 L851 135 Q852 131 853 135 L854.5 135 Q855.5 132 856.5 135 L862 135" fill="none" stroke="#C00E14" stroke-width="1.4" />
<rect x="847.6" y="138.5" width="16.8" height="8" fill="#F3F3F3" />
<path d="M847.5 138.5 L847.5 146.5 L852 146.5" fill="none" stroke="#CFCFCF" stroke-width="1" />
<path d="M854.5 138.5 L863.5 147.5 M863.5 138.5 L854.5 147.5" fill="none" stroke="#C81818" stroke-width="2.8" />
<rect x="905" y="79.8" width="36" height="28" fill="#FFFFFF" stroke="#8E8E8E" stroke-width="2" rx="1.5"/>
<path d="M940 81 L940 107 L912 107 Z" fill="#E4E4E4" />
<rect x="914" y="88" width="2.2" height="15" fill="#8E8E8E" />
<rect x="929" y="98" width="2.2" height="6" fill="#8E8E8E" />
<rect x="924" y="89.3" width="7" height="2" fill="#8E8E8E" />
<rect x="926.5" y="86.5" width="2" height="7" fill="#8E8E8E" />
<rect x="932.5" y="84.5" width="2.2" height="12" fill="#8E8E8E" />
<rect x="1019.5" y="76.5" width="35" height="35" fill="#FFFFFF" stroke="#858585" stroke-width="3" rx="1"/>
<path d="M1022 105 L1030 105 Q1034 104.5 1035.5 96 L1037.5 80.5 L1039.5 96 Q1041 104.5 1045 105 L1052 105" fill="none" stroke="#8A8A8A" stroke-width="2.4" />
<path d="M1027 105 Q1033 104 1035 95 L1037.5 86 L1040 95 Q1042 104 1048 105" fill="none" stroke="#A8A8A8" stroke-width="2" />
<path d="M1030 105 Q1035 103 1036.5 94 L1037.5 90 L1038.5 94 Q1040 103 1045 105" fill="none" stroke="#C4C4C4" stroke-width="1.5" />
<rect x="1093.5" y="75.5" width="17" height="17" fill="#F8F8F8" stroke="#B5B5B5" stroke-width="1" />
<line x1="1094" y1="84" x2="1110" y2="84" stroke="#B5B5B5" stroke-width="1" />
<path d="M1095 80.5 L1097 80.5 L1098 78 L1099 80.5 L1101 80.5 L1102 79 L1103 80.5 L1106 80.5" fill="none" stroke="#8A8A8A" stroke-width="1" />
<path d="M1095 89.5 L1097 89.5 L1098 87 L1099 89.5 L1101 89.5 L1102 88 L1103 89.5 L1106 89.5" fill="none" stroke="#8A8A8A" stroke-width="1" />
<path d="M1103 81 Q1108 81 1108 85 L1110.5 85 L1107 89.5 L1103.5 85 L1105.5 85 Q1105.5 83 1103 83 Z" fill="#9A9A9A" />
<rect x="1164" y="77" width="34" height="27.5" fill="#FFFFFF" stroke="#5A5A5A" stroke-width="1.5" />
<path d="M1197 78 L1197 100 L1180 100 Z" fill="#E2E2E2" />
<path d="M1167.5 98.5 L1172.5 98.5 Q1173.5 98 1174 90 Q1175 81 1176 81 Q1177 81 1177.5 90 Q1178 97 1180 97 Q1182 97 1183 90 Q1184 86.5 1185 90 L1185.5 98.5 L1188 98.5" fill="none" stroke="#BB1010" stroke-width="2.2" stroke-linejoin="round"/>
<path d="M1179 98 L1189.5 98 L1189.5 92.5 L1200 102 L1189.5 111.5 L1189.5 106 L1179 106 Z" fill="#18B018" />
<circle cx="1298.5" cy="199.7" r="4.6" fill="#9CC8F4"/>
<path d="M1297.3 195.7 Q1294.7 199.7 1297.3 203.7" fill="none" stroke="#EAF4FF" stroke-width="1.4" />
<line x1="1303.5" y1="205" x2="1308.5" y2="210.5" stroke="#C8702A" stroke-width="2.2" stroke-linecap="round"/>
<rect x="1303.5" y="196.7" width="7.5" height="2.4" fill="#B01818" />
<rect x="1306" y="194" width="2.4" height="8" fill="#B01818" />
<circle cx="1298.5" cy="226" r="4.6" fill="#9CC8F4"/>
<path d="M1297.3 222 Q1294.7 226 1297.3 230" fill="none" stroke="#EAF4FF" stroke-width="1.4" />
<line x1="1303.5" y1="231" x2="1308.5" y2="236.5" stroke="#C8702A" stroke-width="2.2" stroke-linecap="round"/>
<rect x="1303.5" y="222.5" width="8" height="2.4" fill="#B01818" />
<circle cx="1298.5" cy="252.5" r="4.6" fill="#9CC8F4"/>
<path d="M1297.3 248.5 Q1294.7 252.5 1297.3 256.5" fill="none" stroke="#EAF4FF" stroke-width="1.4" />
<line x1="1303" y1="257.5" x2="1308.5" y2="263.5" stroke="#C8702A" stroke-width="2.2" stroke-linecap="round"/>
<rect x="1292.5" y="258.5" width="2.5" height="2.5" fill="#B01818" />
<rect x="1296.5" y="258.5" width="2.5" height="2.5" fill="#B01818" />
<rect x="1292.5" y="262.5" width="2.5" height="2.5" fill="#B01818" />
<rect x="1296.5" y="262.5" width="2.5" height="2.5" fill="#B01818" />
<circle cx="1298.5" cy="277" r="4.6" fill="#9CC8F4"/>
<path d="M1297.3 273 Q1294.7 277 1297.3 281" fill="none" stroke="#EAF4FF" stroke-width="1.4" />
<path d="M1303.5 283 L1308 278.5 L1310.5 281 L1306 285.5 Z" fill="#F0B890" />
<path d="M1306 277 L1312 274 L1311 281 Z" fill="#E02020" />
<path d="M1296 312 L1293.5 307 Q1292 304.5 1293.5 303.5 Q1295 303 1296 305 L1296 300 Q1296 298 1297.5 298 Q1298.8 298 1299 300 L1299 298.5 Q1299.2 296.5 1300.7 296.5 Q1302.2 296.5 1302.3 298.5 L1302.4 299.5 Q1302.6 298 1304 298 Q1305.4 298.2 1305.4 300 L1305.4 304 Q1306 302 1307.2 302.5 Q1308.2 303 1307.8 305 L1306 310 L1303 312 Z" fill="#F2BE90" stroke="#A86838" stroke-width="0.9" />
<path d="M1305 305.5 L1305 316.5 M1299.5 311 L1310.5 311" fill="none" stroke="#B01818" stroke-width="1.8" />
<path d="M1302.8 307.5 L1305 305 L1307.2 307.5 Z M1302.8 314.5 L1305 317 L1307.2 314.5 Z M1301.5 308.8 L1299 311 L1301.5 313.2 Z M1308.5 308.8 L1311 311 L1308.5 313.2 Z" fill="#B01818" />
<rect x="1292.5" y="325.5" width="18" height="15" fill="#FFFFFF" stroke="#8A8A8A" stroke-width="1" />
<rect x="1295.5" y="323.5" width="11" height="9" fill="#FFFFFF" stroke="#8A8A8A" stroke-width="1" />
<path d="M1297 329 L1299 329 L1300 326 L1301 329 L1304 329" fill="none" stroke="#C81E1E" stroke-width="0.9" />
<line x1="1294" y1="334.5" x2="1299" y2="334.5" stroke="#C81E1E" stroke-width="1" />
<circle cx="1303" cy="334" r="2.4" fill="#A8CCF0"/>
<line x1="1305" y1="336" x2="1308.5" y2="339.5" stroke="#C8702A" stroke-width="2.2" stroke-linecap="round"/>
<line x1="1283" y1="349.5" x2="1321" y2="349.5" stroke="#D2D2D2" stroke-width="1" />
<line x1="1283" y1="408.5" x2="1321" y2="408.5" stroke="#D2D2D2" stroke-width="1" />
<line x1="1283" y1="519.5" x2="1321" y2="519.5" stroke="#D2D2D2" stroke-width="1" />
<line x1="1283" y1="552.5" x2="1321" y2="552.5" stroke="#D2D2D2" stroke-width="1" />
<line x1="1283" y1="621.5" x2="1321" y2="621.5" stroke="#D2D2D2" stroke-width="1" />
<line x1="1283" y1="680.5" x2="1321" y2="680.5" stroke="#D2D2D2" stroke-width="1" />
<circle cx="1299" cy="362" r="4.6" fill="#D4D4D4"/>
<path d="M1298 358 Q1295.5 362 1298 366" fill="none" stroke="#F2F2F2" stroke-width="1.2" />
<path d="M1292 368 L1297 364.5 L1297 371.5 Z" fill="#AAAAAA" />
<line x1="1302" y1="365" x2="1306.5" y2="369.5" stroke="#AAAAAA" stroke-width="2.2" stroke-linecap="round"/>
<circle cx="1303" cy="388" r="4.6" fill="#D4D4D4"/>
<path d="M1302 384 Q1299.5 388 1302 392" fill="none" stroke="#F2F2F2" stroke-width="1.2" />
<path d="M1309 395 L1304 391.5 L1304 398.5 Z" fill="#AAAAAA" />
<line x1="1299.5" y1="391.5" x2="1294.5" y2="396" stroke="#AAAAAA" stroke-width="2.2" stroke-linecap="round"/>
<path d="M1292 432 L1294 432 Q1295.5 431 1296 424 Q1296.5 431 1298 432" fill="none" stroke="#1A4A9A" stroke-width="1.4" />
<path d="M1296 432 L1298 432 Q1299.5 430 1300 416 Q1300.5 430 1302 432 L1303 432" fill="none" stroke="#A01818" stroke-width="1.5" />
<path d="M1305 416 L1310 416 M1307.5 416 L1307.5 432 M1305 432 L1310 432" fill="none" stroke="#A01818" stroke-width="1.4" />
<path d="M1292 458 L1294 458 Q1295.5 457 1296 450 Q1296.5 457 1298 458" fill="none" stroke="#8A8A8A" stroke-width="1.3" />
<path d="M1296 458 L1298 458 Q1299.5 456 1300 442 Q1300.5 456 1302 458 L1303 458" fill="none" stroke="#8A8A8A" stroke-width="1.4" />
<path d="M1305 450 L1310 450 M1307.5 450 L1307.5 458 M1305 458 L1310 458" fill="none" stroke="#8A8A8A" stroke-width="1.3" />
<path d="M1292 485.5 Q1297 485 1299 477 Q1300.5 468 1301.5 476 Q1303 485 1312 485.5" fill="none" stroke="#1A4A9A" stroke-width="1.5" />
<path d="M1304 476 L1304 471 L1301.5 471 L1305.5 466.5 L1309.5 471 L1307 471 L1307 476 Z" fill="#E81818" />
<path d="M1292 512 Q1298 511 1301 504 Q1304 511 1312 512" fill="none" stroke="#1A4A9A" stroke-width="1.5" />
<path d="M1304 494.5 L1307 494.5 L1307 499 L1309.5 499 L1305.5 503.5 L1301.5 499 L1304 499 Z" fill="#E81818" />
<rect x="1292" y="535" width="8.5" height="1.8" fill="#3A5FA0" />
<rect x="1303.5" y="535" width="8.5" height="1.8" fill="#3A5FA0" />
<rect x="1301" y="526" width="1.8" height="8.5" fill="#3A5FA0" />
<rect x="1301" y="538" width="1.8" height="8.5" fill="#3A5FA0" />
<circle cx="1282.5" cy="562" r="2" fill="none" stroke="#E02020" stroke-width="1.2"/><circle cx="1292" cy="562" r="2" fill="none" stroke="#E02020" stroke-width="1.2"/>
<path d="M1283.5 564 L1288 572 M1291 564 L1287 572" fill="none" stroke="#B0B0B0" stroke-width="1" />
<path d="M1281 575.5 L1287 575.5 M1290 575.5 Q1293 575 1294 566 Q1295 560 1296 566 Q1297 575 1300 575.5" fill="none" stroke="#1A4A9A" stroke-width="1.4" />
<path d="M1306 568 L1313 568 L1309.5 572 Z" fill="#7A7A7A" />
<rect x="1287.5" y="593.5" width="18" height="14" fill="#FFFFFF" stroke="#6A6A6A" stroke-width="1" />
<rect x="1298" y="594" width="6" height="13" fill="#8CB0E0" />
<path d="M1289 605 L1292 605 L1293 597 L1294 605 L1295 601 L1296 605 L1300 605 L1301 598 L1302 605 L1304 605" fill="none" stroke="#8A1010" stroke-width="1" />
<path d="M1316 598 L1323 598 L1319.5 602 Z" fill="#7A7A7A" />
<rect x="1282.5" y="629.5" width="18" height="17" fill="#FAFAFA" stroke="#8A8A8A" stroke-width="1.2" />
<path d="M1285 632 L1298 644 M1298 632 L1285 644" fill="none" stroke="#9A9A9A" stroke-width="3" />
<path d="M1306 637 L1313 637 L1309.5 641 Z" fill="#BDBDBD" />
<rect x="1287.5" y="654.5" width="13" height="18" fill="#FFFFFF" stroke="#1A4A9A" stroke-width="1.2" />
<rect x="1281.5" y="661.5" width="7" height="11" fill="#FFFFFF" stroke="#1A4A9A" stroke-width="1.2" />
<circle cx="1294" cy="666" r="4" fill="#F0C020"/><circle cx="1294" cy="666" r="1.8" fill="#E02020"/>
<path d="M1289 658 L1290 656 L1291 658 M1293 658 L1294 656 L1295 658 M1297 658 L1298 656 L1299 658" fill="none" stroke="#B01818" stroke-width="0.8" />
<path d="M1306 663 L1313 663 L1309.5 667 Z" fill="#7A7A7A" />
<path d="M1302 689 L1309 693 L1309 701 L1302 705 L1295 701 L1295 693 Z" fill="#D8D8D8" stroke="#9A9A9A" stroke-width="1" />
<path d="M1295 693 L1302 697 L1309 693 M1302 697 L1302 705" fill="none" stroke="#9A9A9A" stroke-width="1" />
<rect x="1293" y="714.2" width="18" height="1.8" fill="#8E8E8E" />
<path d="M1302 718 Q1306 722 1310 730.5 Q1302 732 1294 730.5 Q1298 722 1302 718 Z" fill="#9A9A9A" />
<path d="M1302 742 Q1306 746 1310 754.5 Q1302 756 1294 754.5 Q1298 746 1302 742 Z" fill="#9A9A9A" />
<path d="M1302 782 Q1306 778 1310 769.5 Q1302 768 1294 769.5 Q1298 778 1302 782 Z" fill="#9A9A9A" />
<path d="M1302 806 Q1306 802 1310 793.5 Q1302 792 1294 793.5 Q1298 802 1302 806 Z" fill="#9A9A9A" />
<rect x="1293" y="808" width="18" height="1.8" fill="#8E8E8E" />
<path d="M1284 822 L1287 819 L1295 819 L1295 830 L1292 833 L1284 833 Z" fill="#E4E4E4" stroke="#9A9A9A" stroke-width="1.2" />
<text x="1285" y="837.5" font-size="10.5" fill="#C4C4C4" text-anchor="start" font-weight="bold" font-family='"Liberation Sans", sans-serif' textLength="15" lengthAdjust="spacingAndGlyphs" >32</text>
<path d="M1306 826 L1313 826 L1309.5 830 Z" fill="#C4C4C4" />
<path d="M1085.5 942.5 L1096 942.5 L1100.5 947 L1100.5 960 L1085.5 960 Z" fill="#FFFFFF" stroke="#8A8A8A" stroke-width="1" />
<line x1="1087.5" y1="946.5" x2="1094" y2="946.5" stroke="#555555" stroke-width="1.2" />
<line x1="1087.5" y1="949.5" x2="1094" y2="949.5" stroke="#555555" stroke-width="1.2" />
<line x1="1087.5" y1="952.5" x2="1094" y2="952.5" stroke="#555555" stroke-width="1.2" />
<path d="M1087 957 Q1089 953 1090.5 956 Q1092 958 1093.5 955.5 L1096 957" fill="none" stroke="#1A4A9A" stroke-width="1" />
<path d="M1094 944.5 L1101.5 952 M1101.5 944.5 L1094 952" fill="none" stroke="#D01818" stroke-width="2.6" />
<rect x="1114.5" y="946.5" width="17" height="11" fill="#F6F6F6" stroke="#A0A0A0" stroke-width="1.3" />
<path d="M1120.5 946 L1120.5 943.5 Q1123 941.5 1125.5 943.5 L1125.5 946" fill="none" stroke="#A0A0A0" stroke-width="1.3" />
<circle cx="1118.5" cy="951" r="1.6" fill="#A0A0A0"/>
<rect x="1116" y="953" width="5" height="2.5" fill="#A0A0A0" />
<line x1="1123" y1="950.5" x2="1129" y2="950.5" stroke="#A0A0A0" stroke-width="1.2" />
<line x1="1123" y1="953.5" x2="1129" y2="953.5" stroke="#A0A0A0" stroke-width="1.2" />
<path d="M1290 944 L1290 955 Q1295 958 1300 955 L1300 944 Z" fill="#0E3E8E" />
<ellipse cx="1295" cy="944" rx="5" ry="2" fill="#2A6AC8"/>
<rect x="1294" y="955" width="2" height="4" fill="#2A8AE8" />
<rect x="1287" y="959" width="16" height="1.3" fill="#5AA8F0" />
<rect x="1293" y="958" width="4" height="2.5" fill="#1A5FCC" />
<circle cx="1300.5" cy="946.5" r="5.3" fill="#E02020" stroke="#FFFFFF" stroke-width="0.8"/>
<rect x="1297.5" y="945.5" width="6" height="2" fill="#FFFFFF" />
<rect x="1328" y="955" width="1.5" height="1.5" fill="#C0C0C0" />
<rect x="1325" y="958" width="1.5" height="1.5" fill="#C0C0C0" />
<rect x="1328" y="958" width="1.5" height="1.5" fill="#C0C0C0" />
<rect x="1322" y="961" width="1.5" height="1.5" fill="#C0C0C0" />
<rect x="1325" y="961" width="1.5" height="1.5" fill="#C0C0C0" />
<rect x="1328" y="961" width="1.5" height="1.5" fill="#C0C0C0" />
</svg></body></html>
